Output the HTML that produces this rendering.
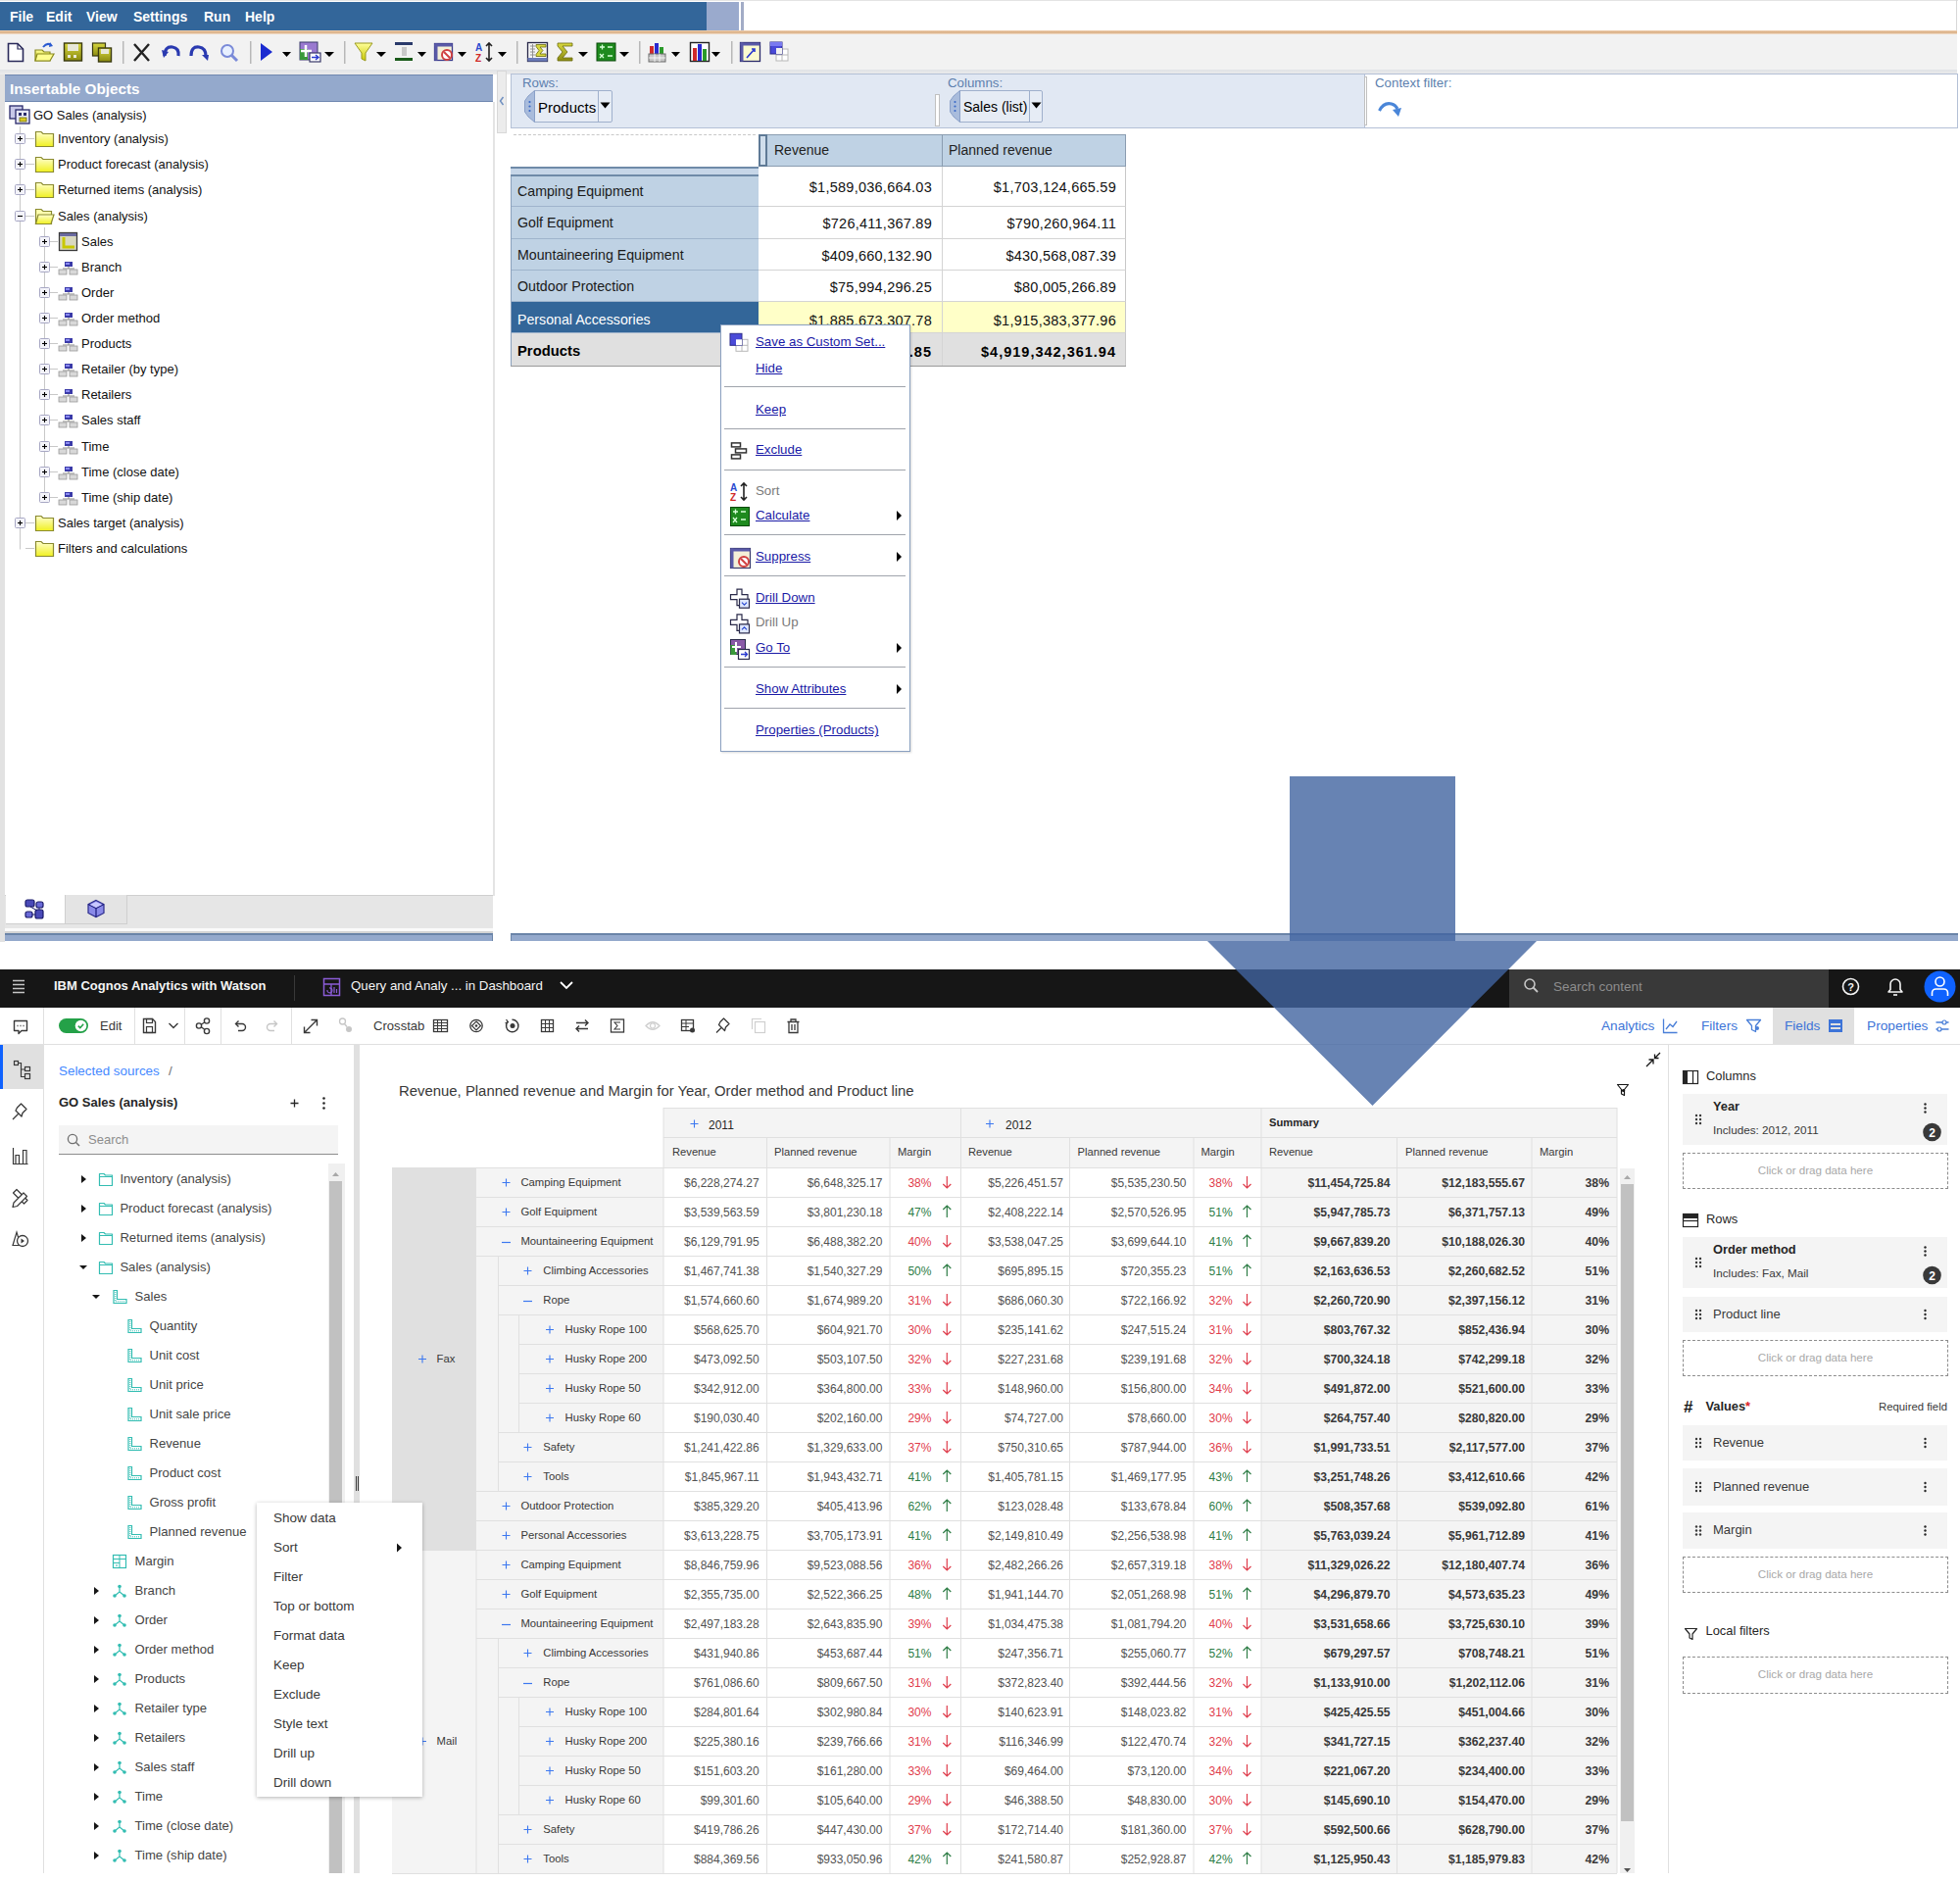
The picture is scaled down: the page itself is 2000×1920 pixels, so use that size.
<!DOCTYPE html>
<html><head><meta charset="utf-8">
<style>
html,body{margin:0;padding:0;width:2000px;height:1920px;overflow:hidden;background:#fff;}
body{position:relative;font-family:"Liberation Sans",sans-serif;}
.a{position:absolute;}
.t{position:absolute;white-space:nowrap;line-height:1;}
svg{overflow:visible}
.menu{color:#fff;font-weight:bold;font-size:14px;top:10px;}
.tree{font-size:13px;color:#111;}
.pm{position:absolute;width:9px;height:9px;border:1px solid #a0a0b8;background:linear-gradient(#fff,#dcdce8);border-radius:1px;box-sizing:content-box}
.pm:before{content:"";position:absolute;left:2px;top:4px;width:5px;height:1px;background:#000;}
.pm.p:after{content:"";position:absolute;left:4px;top:2px;width:1px;height:5px;background:#000;}
.xt{font-size:14.5px;color:#000;}
.cm{font-size:13.5px;color:#1a1aa6;text-decoration:underline;}
.cmg{font-size:13.5px;color:#7a7a7a;}
.cmsep{position:absolute;left:739px;width:185px;height:1px;background:#a0a4ac;}
.b{color:#393939;}
</style></head>
<body>
<!-- ============ TOP SCREENSHOT ============ -->
<div class="a" style="left:0;top:0;width:1998px;height:1px;background:#e4e4e4"></div>
<div class="a" style="left:0;top:2px;width:721px;height:29px;background:#33669a"></div>
<div class="a" style="left:721px;top:2px;width:33px;height:29px;background:#9aaacd"></div>
<div class="a" style="left:756px;top:2px;width:3px;height:29px;background:#a2acc6"></div>
<div class="a" style="left:1996px;top:0;width:1px;height:72px;background:#d8d8d8"></div>
<div class="t menu" style="left:10px">File</div>
<div class="t menu" style="left:47px">Edit</div>
<div class="t menu" style="left:88px">View</div>
<div class="t menu" style="left:136px">Settings</div>
<div class="t menu" style="left:208px">Run</div>
<div class="t menu" style="left:250px">Help</div>
<div class="a" style="left:0;top:31px;width:1997px;height:4px;background:linear-gradient(#f3d8bc,#d6a97c 50%,#f6e6d6)"></div>
<div class="a" style="left:0;top:35px;width:1997px;height:36px;background:#f2f2f2;border-bottom:1px solid #cfd2d6"></div>
<!-- left panel -->
<div class="a" style="left:0;top:72px;width:5px;height:889px;background:#e2e2e2"></div>
<div class="a" style="left:503px;top:104px;width:2px;height:810px;background:#e4e4e4"></div>
<div class="a" style="left:0;top:71px;width:1997px;height:5px;background:linear-gradient(#e0e2e6,#ececec)"></div>
<div class="a" style="left:5px;top:76px;width:498px;height:28px;background:#94a9cc;border-top:1px solid #7088b0;border-bottom:1px solid #7088b0;box-sizing:border-box"></div>
<div class="t" style="left:10px;top:83px;font-size:15.3px;font-weight:bold;color:#fff">Insertable Objects</div>
<div class="a" style="left:5px;top:913px;width:498px;height:34px;background:#e6e6e6;border-top:1px solid #cfcfcf;box-sizing:border-box"></div>
<div class="a" style="left:6px;top:913px;width:60px;height:30px;background:#fff;border-bottom:1px solid #cfcfcf;box-sizing:border-box"></div>
<div class="a" style="left:66px;top:913px;width:64px;height:30px;background:#e4e4e4;border:1px solid #cfcfcf;border-top:none;box-sizing:border-box"></div>
<div class="a" style="left:5px;top:947px;width:498px;height:4px;background:#fafafa"></div>
<div class="a" style="left:5px;top:950px;width:498px;height:2px;background:#d4d4d4"></div>
<div class="a" style="left:5px;top:952px;width:498px;height:8px;background:#94a9cc;border-top:2px solid #6a84a8;border-right:1px solid #6a84a8;box-sizing:border-box"></div>
<div class="a" style="left:521px;top:952px;width:1477px;height:8px;background:#94a9cc;border-top:2px solid #6a84a8;border-left:1px solid #6a84a8;box-sizing:border-box"></div>
<!-- splitter -->
<div class="a" style="left:507px;top:72px;width:10px;height:64px;background:#ececec;border:1px solid #d8d8d8;box-sizing:border-box"></div>
<svg class="a" style="left:509px;top:98px" width="6" height="10"><path d="M4.5 1 L1.5 5 L4.5 9" stroke="#7090c0" stroke-width="1.5" fill="none"/></svg>
<!-- rows/cols drop zone -->
<div class="a" style="left:521px;top:75px;width:873px;height:56px;background:#e1e8f3;border:1px solid #b4c0d6;border-right:none;box-sizing:border-box"></div>
<div class="a" style="left:1392px;top:75px;width:606px;height:56px;background:#fff;border:1px solid #b4c0d6;box-sizing:border-box"></div>
<div class="a" style="left:1392px;top:78px;width:3px;height:50px;background:#fff;border:1px solid #c0c0c0;box-sizing:border-box"></div>
<div class="a" style="left:954px;top:96px;width:5px;height:33px;background:#fff;border:1px solid #c0c0c0;box-sizing:border-box"></div>
<div class="t" style="left:533px;top:77.5px;font-size:13.3px;color:#5d7fae">Rows:</div>
<div class="t" style="left:967px;top:77.5px;font-size:13.3px;color:#5d7fae">Columns:</div>
<div class="t" style="left:1403px;top:77.5px;font-size:13.3px;color:#5d7fae">Context filter:</div>
<!-- Products pill -->
<div class="a" style="left:544px;top:92px;width:81px;height:33px;background:#e6ecf5;border:1px solid #9fb0cc;border-radius:2px;box-sizing:border-box"></div>
<svg class="a" style="left:535px;top:92px" width="12" height="33"><path d="M10.5 0.5 V32.5 L4 27 L0.5 22 V11 L4 6 Z" fill="#a9bcdc" stroke="#8aa0c8"/><circle cx="5.5" cy="12" r="1.1" fill="#3a6ac8"/><circle cx="5.5" cy="16.5" r="1.1" fill="#3a6ac8"/><circle cx="5.5" cy="21" r="1.1" fill="#3a6ac8"/></svg>
<div class="t" style="left:549px;top:102px;font-size:15px;color:#000">Products</div>
<div class="a" style="left:610px;top:93px;width:1px;height:31px;background:#9fb0cc"></div>
<svg class="a" style="left:612px;top:104px" width="12" height="8"><path d="M0.5 0.5 H10.5 L5.5 6.5 Z" fill="#000"/></svg>
<!-- Sales (list) pill -->
<div class="a" style="left:978px;top:92px;width:86px;height:33px;background:#e6ecf5;border:1px solid #9fb0cc;border-radius:2px;box-sizing:border-box"></div>
<svg class="a" style="left:969px;top:92px" width="12" height="33"><path d="M10.5 0.5 V32.5 L4 27 L0.5 22 V11 L4 6 Z" fill="#a9bcdc" stroke="#8aa0c8"/><circle cx="5.5" cy="12" r="1.1" fill="#3a6ac8"/><circle cx="5.5" cy="16.5" r="1.1" fill="#3a6ac8"/><circle cx="5.5" cy="21" r="1.1" fill="#3a6ac8"/></svg>
<div class="t" style="left:983px;top:102px;font-size:14px;color:#000">Sales (list)</div>
<div class="a" style="left:1050px;top:93px;width:1px;height:31px;background:#9fb0cc"></div>
<svg class="a" style="left:1052px;top:104px" width="12" height="8"><path d="M0.5 0.5 H10.5 L5.5 6.5 Z" fill="#000"/></svg>
<!-- redo arrow context filter -->
<svg class="a" style="left:1405px;top:100px" width="28" height="22"><path d="M2.5 13 Q7 4 15 6 Q19 7 21 11" stroke="#4a86d8" stroke-width="3" fill="none"/><path d="M16 12 L25 10 L22 19 Z" fill="#4a86d8"/></svg>
<!-- tabicons -->
<svg class="a" style="left:0;top:913px" width="140" height="40">
<rect x="26" y="5" width="9" height="7" rx="2" fill="#4a4ab8" stroke="#1a1a6a" stroke-width="1.2"/><rect x="37" y="7" width="7" height="6" rx="2" fill="#6a6ad8" stroke="#1a1a6a" stroke-width="1.2"/>
<rect x="26" y="17" width="7" height="6" rx="2" fill="#6a6ad8" stroke="#1a1a6a" stroke-width="1.2"/><rect x="36" y="15" width="8" height="9" rx="2" fill="#4a4ab8" stroke="#1a1a6a" stroke-width="1.2"/>
<path d="M31 12 L38 16 M33 20 H36 M40 13 V15" stroke="#1a1a6a" stroke-width="1"/>
<path d="M98 5.5 L106 9.5 V18.5 L98 22.5 L90 18.5 V9.5 Z" fill="#8a8ae8" stroke="#2a2a8a" stroke-width="1.2"/>
<path d="M90 9.5 L98 13.5 L106 9.5 M98 13.5 V22.5" stroke="#1a1a7a" stroke-width="1.2" fill="none"/>
<path d="M92 10 L98 7 L104 10 L98 13 Z" fill="#c8c8ff"/>
</svg>
<svg class="a" style="left:0;top:35px" width="820" height="36">
<defs>
<linearGradient id="yel" x1="0" y1="0" x2="0" y2="1"><stop offset="0" stop-color="#ffff9a"/><stop offset="1" stop-color="#c8c800"/></linearGradient>
<linearGradient id="olv" x1="0" y1="0" x2="0" y2="1"><stop offset="0" stop-color="#d8d840"/><stop offset="1" stop-color="#8a8a10"/></linearGradient>
</defs>
<!-- new doc -->
<path d="M8.5 9.5 H18 L23.5 15 V27.5 H8.5 Z" fill="#fff" stroke="#2a2a5a" stroke-width="1.6"/>
<path d="M18 9.5 V15 H23.5" fill="none" stroke="#2a2a5a" stroke-width="1.2"/>
<!-- open -->
<path d="M36 16 H43 L45 18 H51 V27 H36 Z" fill="url(#yel)" stroke="#8a8a20" stroke-width="1.2"/>
<path d="M38 20 H55 L51 27 H36 Z" fill="#ffff90" stroke="#8a8a20" stroke-width="1.2"/>
<path d="M44 13 Q48 8 52 11" stroke="#2a5ad0" stroke-width="2" fill="none"/><path d="M51 8 L54 12 L50 13 Z" fill="#2a5ad0"/>
<!-- save -->
<rect x="65.5" y="9" width="18" height="18" fill="url(#olv)" stroke="#3a3a10" stroke-width="1.4"/>
<rect x="69" y="10" width="11" height="7" fill="#e8e8d8"/>
<rect x="69" y="21" width="3" height="3" fill="#e8e8d8"/><rect x="75" y="21" width="3" height="3" fill="#e8e8d8"/>
<!-- save as -->
<rect x="94.5" y="9" width="13" height="13" fill="url(#olv)" stroke="#3a3a10" stroke-width="1.2"/>
<rect x="100.5" y="14" width="13" height="14" fill="url(#olv)" stroke="#3a3a10" stroke-width="1.4"/>
<rect x="103" y="15" width="8" height="5" fill="#e8e8d8"/>
<!-- sep -->
<rect x="125" y="7" width="1.5" height="23" fill="#b8b8b8"/>
<!-- cut -->
<path d="M137 10 L152 27 M152 10 L137 27" stroke="#222" stroke-width="2.4"/>
<!-- undo -->
<path d="M168 22 Q168 12 176 13 Q183 14 182 22" stroke="#2a3ab0" stroke-width="3.2" fill="none"/><path d="M165 16 L172 18 L167 24 Z" fill="#2a3ab0"/>
<!-- redo -->
<path d="M195 22 Q195 12 203 13 Q210 14 210 22" stroke="#2a3ab0" stroke-width="3.2" fill="none"/><path d="M213 21 L206 21 L212 27 Z" fill="#2a3ab0"/>
<!-- find -->
<circle cx="232" cy="17" r="6" fill="#e8f0ff" stroke="#7a8ad8" stroke-width="2"/><path d="M236 21 L242 27" stroke="#7a8ad8" stroke-width="3"/>
<rect x="255" y="7" width="1.5" height="23" fill="#b8b8b8"/>
<!-- run -->
<path d="M266 9 L278 18 L266 27 Z" fill="#1a2ad0"/>
<path d="M288 18 H297 L292.5 23 Z" fill="#000"/>
<!-- report -->
<rect x="306" y="8" width="18" height="18" fill="#9a7ad0" stroke="#3a3a6a" stroke-width="1"/>
<rect x="306" y="15" width="8" height="11" fill="#3a9a3a"/>
<path d="M312 11 V23 M307 17 H318" stroke="#fff" stroke-width="2.5"/>
<rect x="316" y="19" width="11" height="9" fill="#fff" stroke="#3a3a6a" stroke-width="1.2"/><path d="M318 23.5 H324 M322 21 L325 23.5 L322 26" stroke="#2a3ad0" stroke-width="1.4" fill="none"/>
<path d="M331 18 H341 L336 23 Z" fill="#000"/>
<rect x="351" y="7" width="1.5" height="23" fill="#b8b8b8"/>
<!-- filter -->
<path d="M362 9 H380 L373 19 V27 L369 25 V19 Z" fill="url(#yel)" stroke="#9a9a20" stroke-width="1"/>
<path d="M384 18 H394 L389 23 Z" fill="#000"/>
<!-- summarize -->
<rect x="403" y="8" width="18" height="3" fill="#2a3a6a"/><rect x="403" y="24" width="18" height="3" fill="#1a5a1a"/>
<path d="M410 13 H415 V22 H410 Z" fill="#c8c8c8"/>
<path d="M426 18 H435 L430.5 23 Z" fill="#000"/>
<!-- suppress -->
<rect x="443.5" y="9.5" width="18" height="17" fill="#f4f0d8" stroke="#3a3a8a" stroke-width="1.3"/>
<rect x="443.5" y="9.5" width="18" height="3" fill="#5a5aa8"/><rect x="443.5" y="9.5" width="3" height="17" fill="#5a5aa8"/>
<circle cx="456" cy="21" r="5" fill="#fff" stroke="#d04040" stroke-width="2"/><path d="M453 18 L459 24" stroke="#d04040" stroke-width="2"/>
<path d="M467 18 H476 L471.5 23 Z" fill="#000"/>
<!-- sort -->
<text x="485" y="17" font-family="Liberation Sans" font-weight="bold" font-size="10" fill="#2a4ad0">A</text>
<text x="485" y="28" font-family="Liberation Sans" font-weight="bold" font-size="10" fill="#d02a2a">Z</text>
<path d="M499 9 V27 M496 12 L499 9 L502 12 M496 24 L499 27 L502 24" stroke="#222" stroke-width="1.6" fill="none"/>
<path d="M508 18 H517 L512.5 23 Z" fill="#000"/>
<rect x="527" y="7" width="1.5" height="23" fill="#b8b8b8"/>
<!-- summary table -->
<rect x="538.5" y="8.5" width="20" height="19" fill="#f4f4f4" stroke="#2a2a4a" stroke-width="1.3"/>
<path d="M541 12 H546 M541 15 H546 M541 18 H546 M541 21 H546 M543.5 10 V24" stroke="#8a8a8a" stroke-width="0.9"/>
<path d="M547 10.5 H557 V13 H551 L554 16.5 L551 20 H557 V22.5 H547 V20.5 L550 16.5 L547 12.5 Z" fill="#d8d840" stroke="#6a6a10" stroke-width="0.8"/>
<rect x="538.5" y="24" width="20" height="3.5" fill="#6a7ab8"/>
<!-- sigma -->
<path d="M569 9 H584 V12 H574 L579 18 L574 24 H584 V27 H569 V24 L574 18 L569 12 Z" fill="url(#olv)" stroke="#6a6a10" stroke-width="0.8"/>
<path d="M590 18 H600 L595 23 Z" fill="#000"/>
<!-- calc -->
<rect x="609" y="9" width="19" height="18" fill="#1e8a1e" stroke="#0a4a0a" stroke-width="1"/>
<path d="M612 13 H617 M614.5 10.5 V15.5 M620 13 H625 M612 20 L616 24 M616 20 L612 24 M620 22 H625" stroke="#d8ffd8" stroke-width="1.3"/>
<path d="M632 18 H642 L637 23 Z" fill="#000"/>
<rect x="652" y="7" width="1.5" height="23" fill="#b8b8b8"/>
<!-- chart table -->
<rect x="663" y="12" width="4" height="8" fill="#d02a2a"/><rect x="668" y="9" width="4" height="11" fill="#2a2ad0"/><rect x="673" y="13" width="4" height="7" fill="#2a9a2a"/>
<rect x="662" y="20" width="17" height="8" fill="#c8c8c8" stroke="#6a6a6a" stroke-width="1"/>
<path d="M662 24 H679 M668 20 V28 M673 20 V28" stroke="#fff" stroke-width="0.8"/>
<path d="M685 18 H694 L689.5 23 Z" fill="#000"/>
<!-- chart -->
<rect x="704.5" y="8.5" width="19" height="19" fill="#fff" stroke="#222" stroke-width="1.4"/>
<rect x="707" y="14" width="4" height="13" fill="#d02a2a"/><rect x="712" y="10" width="4" height="17" fill="#2a2ad0"/><rect x="717" y="15" width="4" height="12" fill="#2a9a2a"/>
<path d="M726 18 H735 L730.5 23 Z" fill="#000"/>
<rect x="746" y="7" width="1.5" height="23" fill="#b8b8b8"/>
<!-- swap -->
<rect x="755.5" y="8.5" width="20" height="19" fill="#fafad0" stroke="#2a2a6a" stroke-width="1.3"/>
<rect x="755.5" y="8.5" width="20" height="3" fill="#5a5aa8"/><rect x="755.5" y="8.5" width="3" height="19" fill="#5a5aa8"/>
<path d="M762 24 L770 15 M767 15 H770 V18" stroke="#2a3ad0" stroke-width="1.6" fill="none"/>
<!-- custom set -->
<rect x="792" y="15" width="12" height="12" fill="#fff" stroke="#b8b8b8" stroke-width="1"/><path d="M798 15 V27 M792 21 H804" stroke="#b8b8b8"/>
<rect x="786" y="8" width="12" height="12" fill="#4a4ad8" stroke="#2a2a8a" stroke-width="1"/><rect x="786" y="8" width="12" height="4" fill="#7a7af0"/><rect x="792" y="14" width="6" height="6" fill="#f2f2f2"/>
</svg>
<svg class="a" style="left:0;top:0" width="500" height="600">
<defs><linearGradient id="fy" x1="0" y1="0" x2="0" y2="1"><stop offset="0" stop-color="#ffffd0"/><stop offset="1" stop-color="#f0f020"/></linearGradient></defs>
<path d="M20.5 129 V560.5" stroke="#c8c8c8"/>
<path d="M45.5 232 V508.5" stroke="#c8c8c8"/>
<rect x="10" y="108" width="13" height="13" fill="#c8c8e8" stroke="#2a2a6a" stroke-width="1.3"/>
<rect x="16" y="112" width="14" height="14" fill="#e8e8f8" stroke="#2a2a6a" stroke-width="1.3"/>
<rect x="19" y="115" width="3" height="3" fill="#2a2a6a"/><rect x="24" y="115" width="3" height="3" fill="#2a2a6a"/><rect x="20" y="120" width="7" height="4" fill="#d8c820" stroke="#6a6a10" stroke-width="0.8"/>
<path d="M26 141.5 H35" stroke="#c8c8c8"/>
<rect x="15.5" y="136.5" width="10" height="10" rx="1" fill="#f4f4fa" stroke="#a8a8c4"/>
<path d="M18 141.5 H23" stroke="#000" stroke-width="1.1"/>
<path d="M20.5 139 V144" stroke="#000" stroke-width="1.1"/>
<path d="M36.5 134.5 H42 L44 136.5 H54.5 V149.5 H36.5 Z" fill="url(#fy)" stroke="#8a8a30" stroke-width="1.2"/>
<path d="M26 167.5 H35" stroke="#c8c8c8"/>
<rect x="15.5" y="162.5" width="10" height="10" rx="1" fill="#f4f4fa" stroke="#a8a8c4"/>
<path d="M18 167.5 H23" stroke="#000" stroke-width="1.1"/>
<path d="M20.5 165 V170" stroke="#000" stroke-width="1.1"/>
<path d="M36.5 160.5 H42 L44 162.5 H54.5 V175.5 H36.5 Z" fill="url(#fy)" stroke="#8a8a30" stroke-width="1.2"/>
<path d="M26 193.5 H35" stroke="#c8c8c8"/>
<rect x="15.5" y="188.5" width="10" height="10" rx="1" fill="#f4f4fa" stroke="#a8a8c4"/>
<path d="M18 193.5 H23" stroke="#000" stroke-width="1.1"/>
<path d="M20.5 191 V196" stroke="#000" stroke-width="1.1"/>
<path d="M36.5 186.5 H42 L44 188.5 H54.5 V201.5 H36.5 Z" fill="url(#fy)" stroke="#8a8a30" stroke-width="1.2"/>
<path d="M26 220.5 H35" stroke="#c8c8c8"/>
<rect x="15.5" y="215.5" width="10" height="10" rx="1" fill="#f4f4fa" stroke="#a8a8c4"/>
<path d="M18 220.5 H23" stroke="#000" stroke-width="1.1"/>
<path d="M36.5 213.5 H42 L44 215.5 H52.5 V228.5 H36.5 Z" fill="#ffffb0" stroke="#8a8a30" stroke-width="1.2"/>
<path d="M39 219 H55 L52 228.5 H36.5 Z" fill="url(#fy)" stroke="#8a8a30" stroke-width="1.2"/>
<path d="M51 246.5 H59" stroke="#c8c8c8"/>
<rect x="40.5" y="241.5" width="10" height="10" rx="1" fill="#f4f4fa" stroke="#a8a8c4"/>
<path d="M43 246.5 H48" stroke="#000" stroke-width="1.1"/>
<path d="M45.5 244 V249" stroke="#000" stroke-width="1.1"/>
<rect x="60.5" y="237.5" width="18" height="18" fill="#d8d8c0" stroke="#3a3a3a" stroke-width="1.3"/>
<rect x="61" y="238" width="17" height="3" fill="#6a6aa0"/>
<path d="M65 242 V252 H76" stroke="#c8c800" stroke-width="3" fill="none"/>
<path d="M51 272.5 H59" stroke="#c8c8c8"/>
<rect x="40.5" y="267.5" width="10" height="10" rx="1" fill="#f4f4fa" stroke="#a8a8c4"/>
<path d="M43 272.5 H48" stroke="#000" stroke-width="1.1"/>
<path d="M45.5 270 V275" stroke="#000" stroke-width="1.1"/>
<rect x="66" y="267" width="8" height="5" fill="#3a3aa8"/><rect x="67" y="268" width="4" height="2" fill="#8a8af0"/>
<path d="M70 272 V274 M64 274 H76" stroke="#8a8a8a" stroke-width="1"/>
<rect x="60" y="275" width="8" height="5" fill="#d8d8d8" stroke="#9a9a9a" stroke-width="0.8"/><rect x="71" y="275" width="8" height="5" fill="#d8d8d8" stroke="#9a9a9a" stroke-width="0.8"/>
<path d="M51 298.5 H59" stroke="#c8c8c8"/>
<rect x="40.5" y="293.5" width="10" height="10" rx="1" fill="#f4f4fa" stroke="#a8a8c4"/>
<path d="M43 298.5 H48" stroke="#000" stroke-width="1.1"/>
<path d="M45.5 296 V301" stroke="#000" stroke-width="1.1"/>
<rect x="66" y="293" width="8" height="5" fill="#3a3aa8"/><rect x="67" y="294" width="4" height="2" fill="#8a8af0"/>
<path d="M70 298 V300 M64 300 H76" stroke="#8a8a8a" stroke-width="1"/>
<rect x="60" y="301" width="8" height="5" fill="#d8d8d8" stroke="#9a9a9a" stroke-width="0.8"/><rect x="71" y="301" width="8" height="5" fill="#d8d8d8" stroke="#9a9a9a" stroke-width="0.8"/>
<path d="M51 324.5 H59" stroke="#c8c8c8"/>
<rect x="40.5" y="319.5" width="10" height="10" rx="1" fill="#f4f4fa" stroke="#a8a8c4"/>
<path d="M43 324.5 H48" stroke="#000" stroke-width="1.1"/>
<path d="M45.5 322 V327" stroke="#000" stroke-width="1.1"/>
<rect x="66" y="319" width="8" height="5" fill="#3a3aa8"/><rect x="67" y="320" width="4" height="2" fill="#8a8af0"/>
<path d="M70 324 V326 M64 326 H76" stroke="#8a8a8a" stroke-width="1"/>
<rect x="60" y="327" width="8" height="5" fill="#d8d8d8" stroke="#9a9a9a" stroke-width="0.8"/><rect x="71" y="327" width="8" height="5" fill="#d8d8d8" stroke="#9a9a9a" stroke-width="0.8"/>
<path d="M51 350.5 H59" stroke="#c8c8c8"/>
<rect x="40.5" y="345.5" width="10" height="10" rx="1" fill="#f4f4fa" stroke="#a8a8c4"/>
<path d="M43 350.5 H48" stroke="#000" stroke-width="1.1"/>
<path d="M45.5 348 V353" stroke="#000" stroke-width="1.1"/>
<rect x="66" y="345" width="8" height="5" fill="#3a3aa8"/><rect x="67" y="346" width="4" height="2" fill="#8a8af0"/>
<path d="M70 350 V352 M64 352 H76" stroke="#8a8a8a" stroke-width="1"/>
<rect x="60" y="353" width="8" height="5" fill="#d8d8d8" stroke="#9a9a9a" stroke-width="0.8"/><rect x="71" y="353" width="8" height="5" fill="#d8d8d8" stroke="#9a9a9a" stroke-width="0.8"/>
<path d="M51 376.5 H59" stroke="#c8c8c8"/>
<rect x="40.5" y="371.5" width="10" height="10" rx="1" fill="#f4f4fa" stroke="#a8a8c4"/>
<path d="M43 376.5 H48" stroke="#000" stroke-width="1.1"/>
<path d="M45.5 374 V379" stroke="#000" stroke-width="1.1"/>
<rect x="66" y="371" width="8" height="5" fill="#3a3aa8"/><rect x="67" y="372" width="4" height="2" fill="#8a8af0"/>
<path d="M70 376 V378 M64 378 H76" stroke="#8a8a8a" stroke-width="1"/>
<rect x="60" y="379" width="8" height="5" fill="#d8d8d8" stroke="#9a9a9a" stroke-width="0.8"/><rect x="71" y="379" width="8" height="5" fill="#d8d8d8" stroke="#9a9a9a" stroke-width="0.8"/>
<path d="M51 402.5 H59" stroke="#c8c8c8"/>
<rect x="40.5" y="397.5" width="10" height="10" rx="1" fill="#f4f4fa" stroke="#a8a8c4"/>
<path d="M43 402.5 H48" stroke="#000" stroke-width="1.1"/>
<path d="M45.5 400 V405" stroke="#000" stroke-width="1.1"/>
<rect x="66" y="397" width="8" height="5" fill="#3a3aa8"/><rect x="67" y="398" width="4" height="2" fill="#8a8af0"/>
<path d="M70 402 V404 M64 404 H76" stroke="#8a8a8a" stroke-width="1"/>
<rect x="60" y="405" width="8" height="5" fill="#d8d8d8" stroke="#9a9a9a" stroke-width="0.8"/><rect x="71" y="405" width="8" height="5" fill="#d8d8d8" stroke="#9a9a9a" stroke-width="0.8"/>
<path d="M51 428.5 H59" stroke="#c8c8c8"/>
<rect x="40.5" y="423.5" width="10" height="10" rx="1" fill="#f4f4fa" stroke="#a8a8c4"/>
<path d="M43 428.5 H48" stroke="#000" stroke-width="1.1"/>
<path d="M45.5 426 V431" stroke="#000" stroke-width="1.1"/>
<rect x="66" y="423" width="8" height="5" fill="#3a3aa8"/><rect x="67" y="424" width="4" height="2" fill="#8a8af0"/>
<path d="M70 428 V430 M64 430 H76" stroke="#8a8a8a" stroke-width="1"/>
<rect x="60" y="431" width="8" height="5" fill="#d8d8d8" stroke="#9a9a9a" stroke-width="0.8"/><rect x="71" y="431" width="8" height="5" fill="#d8d8d8" stroke="#9a9a9a" stroke-width="0.8"/>
<path d="M51 455.5 H59" stroke="#c8c8c8"/>
<rect x="40.5" y="450.5" width="10" height="10" rx="1" fill="#f4f4fa" stroke="#a8a8c4"/>
<path d="M43 455.5 H48" stroke="#000" stroke-width="1.1"/>
<path d="M45.5 453 V458" stroke="#000" stroke-width="1.1"/>
<rect x="66" y="450" width="8" height="5" fill="#3a3aa8"/><rect x="67" y="451" width="4" height="2" fill="#8a8af0"/>
<path d="M70 455 V457 M64 457 H76" stroke="#8a8a8a" stroke-width="1"/>
<rect x="60" y="458" width="8" height="5" fill="#d8d8d8" stroke="#9a9a9a" stroke-width="0.8"/><rect x="71" y="458" width="8" height="5" fill="#d8d8d8" stroke="#9a9a9a" stroke-width="0.8"/>
<path d="M51 481.5 H59" stroke="#c8c8c8"/>
<rect x="40.5" y="476.5" width="10" height="10" rx="1" fill="#f4f4fa" stroke="#a8a8c4"/>
<path d="M43 481.5 H48" stroke="#000" stroke-width="1.1"/>
<path d="M45.5 479 V484" stroke="#000" stroke-width="1.1"/>
<rect x="66" y="476" width="8" height="5" fill="#3a3aa8"/><rect x="67" y="477" width="4" height="2" fill="#8a8af0"/>
<path d="M70 481 V483 M64 483 H76" stroke="#8a8a8a" stroke-width="1"/>
<rect x="60" y="484" width="8" height="5" fill="#d8d8d8" stroke="#9a9a9a" stroke-width="0.8"/><rect x="71" y="484" width="8" height="5" fill="#d8d8d8" stroke="#9a9a9a" stroke-width="0.8"/>
<path d="M51 507.5 H59" stroke="#c8c8c8"/>
<rect x="40.5" y="502.5" width="10" height="10" rx="1" fill="#f4f4fa" stroke="#a8a8c4"/>
<path d="M43 507.5 H48" stroke="#000" stroke-width="1.1"/>
<path d="M45.5 505 V510" stroke="#000" stroke-width="1.1"/>
<rect x="66" y="502" width="8" height="5" fill="#3a3aa8"/><rect x="67" y="503" width="4" height="2" fill="#8a8af0"/>
<path d="M70 507 V509 M64 509 H76" stroke="#8a8a8a" stroke-width="1"/>
<rect x="60" y="510" width="8" height="5" fill="#d8d8d8" stroke="#9a9a9a" stroke-width="0.8"/><rect x="71" y="510" width="8" height="5" fill="#d8d8d8" stroke="#9a9a9a" stroke-width="0.8"/>
<path d="M26 533.5 H35" stroke="#c8c8c8"/>
<rect x="15.5" y="528.5" width="10" height="10" rx="1" fill="#f4f4fa" stroke="#a8a8c4"/>
<path d="M18 533.5 H23" stroke="#000" stroke-width="1.1"/>
<path d="M20.5 531 V536" stroke="#000" stroke-width="1.1"/>
<path d="M36.5 526.5 H42 L44 528.5 H54.5 V541.5 H36.5 Z" fill="url(#fy)" stroke="#8a8a30" stroke-width="1.2"/>
<path d="M26 559.5 H35" stroke="#c8c8c8"/>
<path d="M36.5 552.5 H42 L44 554.5 H54.5 V567.5 H36.5 Z" fill="url(#fy)" stroke="#8a8a30" stroke-width="1.2"/>
</svg>
<div class="t tree" style="left:34px;top:111px">GO Sales (analysis)</div>
<div class="t tree" style="left:59px;top:135px">Inventory (analysis)</div>
<div class="t tree" style="left:59px;top:161px">Product forecast (analysis)</div>
<div class="t tree" style="left:59px;top:187px">Returned items (analysis)</div>
<div class="t tree" style="left:59px;top:214px">Sales (analysis)</div>
<div class="t tree" style="left:83px;top:240px">Sales</div>
<div class="t tree" style="left:83px;top:266px">Branch</div>
<div class="t tree" style="left:83px;top:292px">Order</div>
<div class="t tree" style="left:83px;top:318px">Order method</div>
<div class="t tree" style="left:83px;top:344px">Products</div>
<div class="t tree" style="left:83px;top:370px">Retailer (by type)</div>
<div class="t tree" style="left:83px;top:396px">Retailers</div>
<div class="t tree" style="left:83px;top:422px">Sales staff</div>
<div class="t tree" style="left:83px;top:449px">Time</div>
<div class="t tree" style="left:83px;top:475px">Time (close date)</div>
<div class="t tree" style="left:83px;top:501px">Time (ship date)</div>
<div class="t tree" style="left:59px;top:527px">Sales target (analysis)</div>
<div class="t tree" style="left:59px;top:553px">Filters and calculations</div>
<div class="a" style="left:524px;top:137px;width:247px;height:0;border-top:1px dashed #c8c8c8"></div>
<div class="a" style="left:774px;top:137px;width:375px;height:33px;background:#bfd2e4;border:1px solid #8a9cb0;box-sizing:border-box"></div>
<div class="a" style="left:774px;top:137px;width:9px;height:33px;background:#d0deec;border:2px solid #5f7a96;box-sizing:border-box"></div>
<div class="a" style="left:961px;top:137px;width:1px;height:33px;background:#8a9cb0"></div>
<div class="t xt" style="left:790px;top:146px;font-size:14px;color:#222">Revenue</div>
<div class="t xt" style="left:968px;top:146px;font-size:14px;color:#222">Planned revenue</div>
<div class="a" style="left:521px;top:170px;width:253px;height:10px;background:#c6d6e8;border-top:2px solid #6f8aa8;border-bottom:2px solid #6f8aa8;box-sizing:border-box"></div>
<div class="a" style="left:521px;top:180px;width:253px;height:31px;background:#bfd2e4;border-bottom:1px solid #9fb4cc;box-sizing:border-box"></div>
<div class="a" style="left:774px;top:180px;width:188px;height:31px;background:#fff;border-bottom:1px solid #d4d4d4;border-right:1px solid #d4d4d4;box-sizing:border-box"></div>
<div class="a" style="left:962px;top:180px;width:187px;height:31px;background:#fff;border-bottom:1px solid #d4d4d4;border-right:1px solid #c8c8c8;box-sizing:border-box"></div>
<div class="t" style="left:528px;top:188.1px;font-size:14.2px;color:#1a1a1a">Camping Equipment</div>
<div class="t" style="right:1049px;top:184.1px;font-size:14.5px;letter-spacing:0.25px;color:#111">$1,589,036,664.03</div>
<div class="t" style="right:861px;top:184.1px;font-size:14.5px;letter-spacing:0.25px;color:#111">$1,703,124,665.59</div>
<div class="a" style="left:521px;top:211px;width:253px;height:33px;background:#bfd2e4;border-bottom:1px solid #9fb4cc;box-sizing:border-box"></div>
<div class="a" style="left:774px;top:211px;width:188px;height:33px;background:#fff;border-bottom:1px solid #d4d4d4;border-right:1px solid #d4d4d4;box-sizing:border-box"></div>
<div class="a" style="left:962px;top:211px;width:187px;height:33px;background:#fff;border-bottom:1px solid #d4d4d4;border-right:1px solid #c8c8c8;box-sizing:border-box"></div>
<div class="t" style="left:528px;top:220.1px;font-size:14.2px;color:#1a1a1a">Golf Equipment</div>
<div class="t" style="right:1049px;top:221.1px;font-size:14.5px;letter-spacing:0.25px;color:#111">$726,411,367.89</div>
<div class="t" style="right:861px;top:221.1px;font-size:14.5px;letter-spacing:0.25px;color:#111">$790,260,964.11</div>
<div class="a" style="left:521px;top:244px;width:253px;height:32px;background:#bfd2e4;border-bottom:1px solid #9fb4cc;box-sizing:border-box"></div>
<div class="a" style="left:774px;top:244px;width:188px;height:32px;background:#fff;border-bottom:1px solid #d4d4d4;border-right:1px solid #d4d4d4;box-sizing:border-box"></div>
<div class="a" style="left:962px;top:244px;width:187px;height:32px;background:#fff;border-bottom:1px solid #d4d4d4;border-right:1px solid #c8c8c8;box-sizing:border-box"></div>
<div class="t" style="left:528px;top:252.8px;font-size:14.2px;color:#1a1a1a">Mountaineering Equipment</div>
<div class="t" style="right:1049px;top:253.5px;font-size:14.5px;letter-spacing:0.25px;color:#111">$409,660,132.90</div>
<div class="t" style="right:861px;top:253.5px;font-size:14.5px;letter-spacing:0.25px;color:#111">$430,568,087.39</div>
<div class="a" style="left:521px;top:276px;width:253px;height:32px;background:#bfd2e4;border-bottom:1px solid #9fb4cc;box-sizing:border-box"></div>
<div class="a" style="left:774px;top:276px;width:188px;height:32px;background:#fff;border-bottom:1px solid #d4d4d4;border-right:1px solid #d4d4d4;box-sizing:border-box"></div>
<div class="a" style="left:962px;top:276px;width:187px;height:32px;background:#fff;border-bottom:1px solid #d4d4d4;border-right:1px solid #c8c8c8;box-sizing:border-box"></div>
<div class="t" style="left:528px;top:285.1px;font-size:14.2px;color:#1a1a1a">Outdoor Protection</div>
<div class="t" style="right:1049px;top:286.1px;font-size:14.5px;letter-spacing:0.25px;color:#111">$75,994,296.25</div>
<div class="t" style="right:861px;top:286.1px;font-size:14.5px;letter-spacing:0.25px;color:#111">$80,005,266.89</div>
<div class="a" style="left:521px;top:308px;width:253px;height:32px;background:#336699;border-bottom:1px solid #9fb4cc;box-sizing:border-box"></div>
<div class="a" style="left:774px;top:308px;width:188px;height:32px;background:#ffffc8;border-bottom:1px solid #d4d4d4;border-right:1px solid #d4d4d4;box-sizing:border-box"></div>
<div class="a" style="left:962px;top:308px;width:187px;height:32px;background:#ffffc8;border-bottom:1px solid #d4d4d4;border-right:1px solid #c8c8c8;box-sizing:border-box"></div>
<div class="t" style="left:528px;top:318.5px;font-size:14.2px;color:#fff">Personal Accessories</div>
<div class="t" style="right:1049px;top:319.5px;font-size:14.5px;letter-spacing:0.25px;color:#111">$1,885,673,307.78</div>
<div class="t" style="right:861px;top:319.5px;font-size:14.5px;letter-spacing:0.25px;color:#111">$1,915,383,377.96</div>
<div class="a" style="left:521px;top:340px;width:253px;height:34px;background:#e0e0e0;border-bottom:1px solid #a8a8a8;box-sizing:border-box"></div>
<div class="a" style="left:774px;top:340px;width:188px;height:34px;background:#e0e0e0;border-bottom:1px solid #d4d4d4;border-right:1px solid #d4d4d4;box-sizing:border-box"></div>
<div class="a" style="left:962px;top:340px;width:187px;height:34px;background:#e0e0e0;border-bottom:1px solid #d4d4d4;border-right:1px solid #c8c8c8;box-sizing:border-box"></div>
<div class="t" style="left:528px;top:350.5px;font-size:14.8px;font-weight:bold;color:#000">Products</div>
<div class="t" style="right:1049px;top:351.5px;font-size:14.5px;font-weight:bold;letter-spacing:1px;color:#000">$4,686,775,768.85</div>
<div class="t" style="right:861px;top:351.5px;font-size:14.5px;font-weight:bold;letter-spacing:1px;color:#000">$4,919,342,361.94</div>
<div class="a" style="left:521px;top:180px;width:1px;height:194px;background:#8aa0bc"></div>
<div class="a" style="left:521px;top:373px;width:628px;height:1px;background:#9a9a9a"></div>
<div class="a" style="left:961px;top:170px;width:1px;height:10px;background:#d4d4d4"></div>
<div class="a" style="left:1148px;top:170px;width:1px;height:10px;background:#c8c8c8"></div>
<div class="a" style="left:735px;top:331px;width:194px;height:436px;background:#fff;border:1px solid #8aa0c0;box-sizing:border-box;box-shadow:1px 1px 2px rgba(0,0,0,0.15)"></div>
<div class="cmsep" style="top:394px"></div>
<div class="cmsep" style="top:437px"></div>
<div class="cmsep" style="top:479px"></div>
<div class="cmsep" style="top:545px"></div>
<div class="cmsep" style="top:587px"></div>
<div class="cmsep" style="top:680px"></div>
<div class="cmsep" style="top:722px"></div>
<div class="t cm" style="left:771px;top:342.3px;font-size:13.3px">Save as Custom Set...</div>
<div class="t cm" style="left:771px;top:368.7px;font-size:13.3px">Hide</div>
<div class="t cm" style="left:771px;top:410.8px;font-size:13.3px">Keep</div>
<div class="t cm" style="left:771px;top:452.4px;font-size:13.3px">Exclude</div>
<div class="t cmg" style="left:771px;top:494px;font-size:13.3px">Sort</div>
<div class="t cm" style="left:771px;top:519px;font-size:13.3px">Calculate</div>
<div class="t cm" style="left:771px;top:561px;font-size:13.3px">Suppress</div>
<div class="t cm" style="left:771px;top:602.7px;font-size:13.3px">Drill Down</div>
<div class="t cmg" style="left:771px;top:628.4px;font-size:13.3px">Drill Up</div>
<div class="t cm" style="left:771px;top:654px;font-size:13.3px">Go To</div>
<div class="t cm" style="left:771px;top:696px;font-size:13.3px">Show Attributes</div>
<div class="t cm" style="left:771px;top:738.4px;font-size:13.3px">Properties (Products)</div>
<svg class="a" style="left:0;top:0" width="940" height="780">
<rect x="751" y="346.3" width="12" height="12" fill="#fff" stroke="#b8b8b8"/><path d="M757 346.3 V358.3 M751 352.3 H763" stroke="#b8b8b8"/>
<rect x="745" y="340.3" width="12" height="12" fill="#4a4ad8" stroke="#2a2a8a"/><rect x="751" y="346.3" width="6" height="6" fill="#fff"/>
<rect x="746.5" y="451.9" width="9" height="4" fill="#fff" stroke="#333" stroke-width="1.5"/><rect x="750.5" y="457.9" width="11" height="4" fill="#fff" stroke="#333" stroke-width="1.5"/><rect x="746.5" y="463.9" width="9" height="4" fill="#fff" stroke="#333" stroke-width="1.5"/>
<text x="745" y="501" font-family="Liberation Sans" font-weight="bold" font-size="10" fill="#2a4ad0">A</text><text x="745" y="511" font-family="Liberation Sans" font-weight="bold" font-size="10" fill="#d02a2a">Z</text>
<path d="M759 493 V510 M756 496 L759 493 L762 496 M756 507 L759 510 L762 507" stroke="#222" stroke-width="1.6" fill="none"/>
<path d="M915 521 L920 526 L915 531 Z" fill="#000"/>
<rect x="745.5" y="517.5" width="19" height="19" fill="#1e8a1e" stroke="#0a4a0a"/><path d="M748 522 H753 M750.5 519.5 V524.5 M756 522 H761 M748 528 L752 533 M752 528 L748 533 M756 530 H761" stroke="#d8ffd8" stroke-width="1.3"/>
<path d="M915 563 L920 568 L915 573 Z" fill="#000"/>
<rect x="745.5" y="559.5" width="20" height="20" fill="#f4f0d8" stroke="#3a3a6a" stroke-width="1.2"/><rect x="745.5" y="559.5" width="20" height="3" fill="#5a5aa8"/><rect x="745.5" y="559.5" width="3" height="20" fill="#5a5aa8"/><circle cx="759" cy="573" r="5" fill="#fff" stroke="#d04040" stroke-width="2"/><path d="M756 570 L762 576" stroke="#d04040" stroke-width="2"/>
<path d="M752 601.2 H757 V606.7 H763 V611.7 H757 V617.7 H752 V611.7 H745.5 V606.7 H752 Z" fill="#fff" stroke="#2a2a4a" stroke-width="1.2"/>
<rect x="754.5" y="611.2" width="10" height="9" fill="#dfe8ff" stroke="#2a2a4a" stroke-width="1.2"/>
<path d="M757 614.7 L759.5 617.2 L762 614.7" stroke="#2a4ad0" stroke-width="1.2" fill="none"/>
<path d="M752 626.9 H757 V632.4 H763 V637.4 H757 V643.4 H752 V637.4 H745.5 V632.4 H752 Z" fill="#fff" stroke="#2a2a4a" stroke-width="1.2"/>
<rect x="754.5" y="636.9" width="10" height="9" fill="#dfe8ff" stroke="#2a2a4a" stroke-width="1.2"/>
<path d="M757 642.4 L759.5 639.9 L762 642.4" stroke="#2a4ad0" stroke-width="1.2" fill="none"/>
<path d="M915 656 L920 661 L915 666 Z" fill="#000"/>
<rect x="745.5" y="652.5" width="15" height="15" fill="#8a5aa8" stroke="#2a2a4a"/><rect x="745.5" y="658" width="6" height="10" fill="#3a9a3a"/><path d="M751 655 V665 M747 660 H756" stroke="#fff" stroke-width="2"/><rect x="753.5" y="662.5" width="11" height="10" fill="#fff" stroke="#2a2a4a" stroke-width="1.2"/><path d="M756 667.5 H762 M760 665 L762.5 667.5 L760 670" stroke="#2a3ad0" stroke-width="1.3" fill="none"/>
<path d="M915 698 L920 703 L915 708 Z" fill="#000"/>
</svg>
<!-- ============ BOTTOM SCREENSHOT ============ -->
<div class="a" style="left:0;top:989px;width:2000px;height:39px;background:#161616"></div>
<svg class="a" style="left:0;top:989px" width="2000" height="39">
<path d="M13 11.5 H25 M13 15.5 H25 M13 19.5 H25 M13 23.5 H25" stroke="#c6c6c6" stroke-width="1.6"/>
<rect x="300" y="6" width="1" height="26" fill="#393939"/>
<rect x="330.5" y="9.5" width="16" height="17" fill="none" stroke="#8a5cd6" stroke-width="1.5"/>
<path d="M330.5 15 H346.5 M338 15 V26.5" stroke="#8a5cd6" stroke-width="1.3"/>
<path d="M334 21 A2.5 2.5 0 1 0 336 19" stroke="#8a5cd6" stroke-width="1.2" fill="none"/>
<path d="M341 18 V24 M343.5 20 V24" stroke="#8a5cd6" stroke-width="1.2"/>
<path d="M572 13 L578 19 L584 13" stroke="#fff" stroke-width="1.8" fill="none"/>
<rect x="1540" y="0" width="326" height="39" fill="#393939"/>
<circle cx="1561" cy="15" r="5" fill="none" stroke="#c6c6c6" stroke-width="1.6"/><path d="M1564.5 18.5 L1569 23" stroke="#c6c6c6" stroke-width="1.8"/>
<circle cx="1888.5" cy="17.5" r="8" fill="none" stroke="#f4f4f4" stroke-width="1.6"/>
<text x="1888.5" y="22" text-anchor="middle" font-family="Liberation Sans" font-size="11" font-weight="bold" fill="#f4f4f4">?</text>
<path d="M1927 23 H1941 L1939 20.5 V15 A5 5 0 0 0 1929 15 V20.5 Z" fill="none" stroke="#f4f4f4" stroke-width="1.6" stroke-linejoin="round"/>
<path d="M1932 26 H1936" stroke="#f4f4f4" stroke-width="1.6"/>
<circle cx="1979.5" cy="17.5" r="16" fill="#0f62fe"/>
<circle cx="1979.5" cy="12.5" r="4.5" fill="none" stroke="#fff" stroke-width="1.6"/>
<path d="M1971.5 27 V24 A4 4 0 0 1 1975.5 20 H1983.5 A4 4 0 0 1 1987.5 24 V27" fill="none" stroke="#fff" stroke-width="1.6"/>
</svg>
<div class="t" style="left:55px;top:999px;font-size:13px;font-weight:bold;color:#f4f4f4">IBM Cognos Analytics with Watson</div>
<div class="t" style="left:358px;top:999px;font-size:13.3px;color:#f4f4f4">Query and Analy ... in Dashboard</div>
<div class="t" style="left:1585px;top:1000px;font-size:13.5px;color:#8d8d8d">Search content</div>
<!-- toolbar -->
<div class="a" style="left:0;top:1065px;width:2000px;height:1px;background:#e0e0e0"></div>
<div class="a" style="left:1809px;top:1028px;width:83px;height:37px;background:#e0e0e0"></div>
<svg class="a" style="left:0;top:1028px" width="2000" height="38">
<g fill="#e0e0e0"><rect x="44" y="0" width="1" height="38"/><rect x="137" y="0" width="1" height="38"/><rect x="188" y="0" width="1" height="38"/><rect x="225" y="0" width="1" height="38"/><rect x="297" y="0" width="1" height="38"/></g>
<!-- comment -->
<path d="M14.5 13.5 H27.5 V23.5 H22 L19 26.5 V23.5 H14.5 Z" fill="none" stroke="#393939" stroke-width="1.4" stroke-linejoin="round"/>
<path d="M17.5 18.5 H18.5 M20.5 18.5 H21.5 M23.5 18.5 H24.5" stroke="#393939" stroke-width="1.6"/>
<!-- toggle -->
<rect x="60" y="11" width="30" height="15" rx="7.5" fill="#24a148"/>
<circle cx="82.5" cy="18.5" r="5.8" fill="#fff"/>
<path d="M79.8 18.6 L81.8 20.6 L85.2 16.8" stroke="#24a148" stroke-width="1.5" fill="none"/>
<!-- save -->
<path d="M146.5 11.5 H155.5 L158.5 14.5 V25.5 H146.5 Z" fill="none" stroke="#393939" stroke-width="1.4"/>
<rect x="149.5" y="11.5" width="6" height="4" fill="none" stroke="#393939" stroke-width="1.2"/><rect x="149.5" y="19.5" width="6" height="6" fill="none" stroke="#393939" stroke-width="1.2"/>
<path d="M172.5 16 L177 20.5 L181.5 16" stroke="#393939" stroke-width="1.4" fill="none"/>
<!-- share -->
<circle cx="203" cy="18.5" r="2.6" fill="none" stroke="#393939" stroke-width="1.4"/><circle cx="211" cy="13.5" r="2.6" fill="none" stroke="#393939" stroke-width="1.4"/><circle cx="211" cy="24" r="2.6" fill="none" stroke="#393939" stroke-width="1.4"/>
<path d="M205.3 17.2 L208.7 15 M205.3 19.8 L208.7 22.3" stroke="#393939" stroke-width="1.3"/>
<!-- undo / redo -->
<path d="M241 16.5 H247 A3.5 3.5 0 0 1 247 23.5 H243" stroke="#393939" stroke-width="1.4" fill="none"/><path d="M243.5 13.5 L240.5 16.5 L243.5 19.5" stroke="#393939" stroke-width="1.4" fill="none"/>
<path d="M282 16.5 H276 A3.5 3.5 0 0 0 276 23.5 H280" stroke="#c6c6c6" stroke-width="1.4" fill="none"/><path d="M279.5 13.5 L282.5 16.5 L279.5 19.5" stroke="#c6c6c6" stroke-width="1.4" fill="none"/>
<!-- expand -->
<path d="M310.5 25.5 L323 13 M317.5 12.5 H323.5 V18.5 M310.5 19.5 V25.5 H316.5" stroke="#393939" stroke-width="1.4" fill="none"/>
<!-- link gray -->
<circle cx="349.5" cy="14" r="3" fill="none" stroke="#c6c6c6" stroke-width="1.3"/><circle cx="356" cy="22" r="3" fill="#c6c6c6"/><path d="M351.5 16.5 L354 19.5" stroke="#c6c6c6" stroke-width="1.3"/>
<!-- crosstab table icon -->
<rect x="442.5" y="12.5" width="14" height="12" fill="none" stroke="#393939" stroke-width="1.3"/>
<path d="M442.5 15.5 H456.5 M442.5 18.5 H456.5 M442.5 21.5 H456.5 M446.5 12.5 V24.5 M450.5 12.5 V24.5" stroke="#393939" stroke-width="1"/>
<!-- target icon -->
<circle cx="486" cy="18.5" r="6.2" fill="none" stroke="#393939" stroke-width="1.3"/><path d="M486 14 L490.5 18.5 L486 23 L481.5 18.5 Z" fill="none" stroke="#393939" stroke-width="1.2"/><circle cx="486" cy="18.5" r="1.3" fill="#393939"/>
<!-- refresh dot -->
<path d="M518 14.5 A6.2 6.2 0 1 0 522.5 12.3" stroke="#393939" stroke-width="1.4" fill="none"/><path d="M516.5 12 L518.5 14.8 L515.5 15.8" stroke="#393939" stroke-width="1.2" fill="none"/><circle cx="523" cy="18.5" r="2.5" fill="#393939"/>
<!-- grid -->
<rect x="552.5" y="12.5" width="12" height="12" fill="none" stroke="#393939" stroke-width="1.3"/><path d="M552.5 16.5 H564.5 M552.5 20.5 H564.5 M556.5 12.5 V24.5 M560.5 12.5 V24.5" stroke="#393939" stroke-width="1"/>
<!-- swap -->
<path d="M588 15.5 H600 M597 12.5 L600 15.5 L597 18.5 M600 21.5 H588 M591 18.5 L588 21.5 L591 24.5" stroke="#393939" stroke-width="1.4" fill="none"/>
<!-- sigma box -->
<rect x="623.5" y="12" width="13" height="13" fill="none" stroke="#393939" stroke-width="1.3"/><path d="M633 15 H627 L630 18.5 L627 22 H633" stroke="#393939" stroke-width="1.1" fill="none"/>
<!-- eye gray -->
<path d="M659 18.5 Q666 11 673 18.5 Q666 26 659 18.5 Z" fill="none" stroke="#d0d0d0" stroke-width="1.3"/><circle cx="666" cy="18.5" r="2.5" fill="none" stroke="#d0d0d0" stroke-width="1.2"/>
<!-- table dot -->
<rect x="695.5" y="12.5" width="12" height="11" fill="none" stroke="#393939" stroke-width="1.3"/><path d="M695.5 16 H707.5 M695.5 19.5 H703 M700 12.5 V23.5" stroke="#393939" stroke-width="1"/><circle cx="706.5" cy="23" r="2.5" fill="#393939"/>
<!-- pin -->
<path d="M731 25.5 L736 20.5 M733.5 17.5 L739.5 23.5 L740.5 20 L744 16.5 L738.5 11 L735 14.5 Z" fill="none" stroke="#393939" stroke-width="1.3" stroke-linejoin="round"/>
<!-- copy gray -->
<rect x="770.5" y="14.5" width="10" height="11" fill="none" stroke="#d0d0d0" stroke-width="1.2"/><path d="M767.5 22 V11.5 H777" stroke="#d0d0d0" stroke-width="1.2" fill="none"/>
<!-- trash -->
<path d="M803.5 14.5 H815.5 M807 14.5 V12 H812 V14.5 M805 14.5 V25.5 H814 V14.5 M808 17 V23 M811 17 V23" stroke="#393939" stroke-width="1.3" fill="none"/>
<!-- right tabs icons -->
<path d="M1697.5 11.5 V25.5 H1711.5 M1700 22 L1704 17 L1707 19.5 L1711 14" stroke="#4a7fd8" stroke-width="1.3" fill="none"/>
<path d="M1782.5 12.5 H1796.5 L1791.5 18.5 V24.5 L1787.5 22.5 V18.5 Z" fill="none" stroke="#4a7fd8" stroke-width="1.3" stroke-linejoin="round"/><circle cx="1793" cy="21" r="2" fill="#4a7fd8"/>
<rect x="1866" y="12" width="14" height="13" fill="#3d74d8"/><rect x="1868" y="16" width="10" height="2" fill="#e0e0e0"/><rect x="1868" y="20" width="10" height="2" fill="#e0e0e0"/>
<path d="M1975.5 15 H1988.5 M1975.5 22 H1988.5" stroke="#4a7fd8" stroke-width="1.3"/><circle cx="1984" cy="15" r="2" fill="#fff" stroke="#4a7fd8" stroke-width="1.2"/><circle cx="1979" cy="22" r="2" fill="#fff" stroke="#4a7fd8" stroke-width="1.2"/>
</svg>
<div class="t" style="left:102px;top:1040px;font-size:13px;color:#393939">Edit</div>
<div class="t" style="left:381px;top:1040px;font-size:13.1px;color:#393939">Crosstab</div>
<div class="t" style="left:1634px;top:1040px;font-size:13.6px;color:#3d74d8">Analytics</div>
<div class="t" style="left:1736px;top:1040px;font-size:13.6px;color:#3d74d8">Filters</div>
<div class="t" style="left:1821px;top:1040px;font-size:13.6px;color:#3d74d8">Fields</div>
<div class="t" style="left:1905px;top:1040px;font-size:13.7px;color:#3d74d8">Properties</div>
<div class="a" style="left:44px;top:1066px;width:1px;height:845px;background:#e0e0e0"></div>
<div class="a" style="left:0;top:1066px;width:44px;height:45px;background:#e0e0e0"></div>
<div class="a" style="left:0;top:1066px;width:3px;height:45px;background:#0f62fe"></div>
<div class="t" style="left:60px;top:1086px;font-size:13.4px;color:#4589ff">Selected sources</div>
<div class="t" style="left:172px;top:1086px;font-size:13.4px;color:#6f6f6f">/</div>
<div class="t" style="left:60px;top:1118px;font-size:13px;font-weight:bold;color:#262626">GO Sales (analysis)</div>
<div class="a" style="left:60px;top:1148px;width:285px;height:30px;background:#f4f4f4;border-bottom:1px solid #8d8d8d;box-sizing:border-box"></div>
<div class="t" style="left:90px;top:1156px;font-size:13px;color:#8d8d8d">Search</div>
<div class="a" style="left:335px;top:1187px;width:17px;height:724px;background:#f0f0f0"></div>
<div class="a" style="left:336px;top:1205px;width:13px;height:706px;background:#c1c1c1"></div>
<div class="a" style="left:361px;top:1066px;width:6px;height:845px;background:#e0e0e0"></div>
<div class="a" style="left:363px;top:1506px;width:1px;height:15px;background:#393939"></div>
<div class="a" style="left:365px;top:1506px;width:1px;height:15px;background:#393939"></div>
<div class="t" style="left:122.4px;top:1195.5px;font-size:13.1px;color:#454545">Inventory (analysis)</div>
<div class="t" style="left:122.4px;top:1225.5px;font-size:13.1px;color:#454545">Product forecast (analysis)</div>
<div class="t" style="left:122.4px;top:1255.5px;font-size:13.1px;color:#454545">Returned items (analysis)</div>
<div class="t" style="left:122.4px;top:1285.5px;font-size:13.1px;color:#454545">Sales (analysis)</div>
<div class="t" style="left:137.5px;top:1315.5px;font-size:13.1px;color:#454545">Sales</div>
<div class="t" style="left:152.5px;top:1345.5px;font-size:13.1px;color:#454545">Quantity</div>
<div class="t" style="left:152.5px;top:1375.5px;font-size:13.1px;color:#454545">Unit cost</div>
<div class="t" style="left:152.5px;top:1405.5px;font-size:13.1px;color:#454545">Unit price</div>
<div class="t" style="left:152.5px;top:1435.5px;font-size:13.1px;color:#454545">Unit sale price</div>
<div class="t" style="left:152.5px;top:1465.5px;font-size:13.1px;color:#454545">Revenue</div>
<div class="t" style="left:152.5px;top:1495.5px;font-size:13.1px;color:#454545">Product cost</div>
<div class="t" style="left:152.5px;top:1525.5px;font-size:13.1px;color:#454545">Gross profit</div>
<div class="t" style="left:152.5px;top:1555.5px;font-size:13.1px;color:#454545">Planned revenue</div>
<div class="t" style="left:137.5px;top:1585.5px;font-size:13.1px;color:#454545">Margin</div>
<div class="t" style="left:137.5px;top:1615.5px;font-size:13.1px;color:#454545">Branch</div>
<div class="t" style="left:137.5px;top:1645.5px;font-size:13.1px;color:#454545">Order</div>
<div class="t" style="left:137.5px;top:1675.5px;font-size:13.1px;color:#454545">Order method</div>
<div class="t" style="left:137.5px;top:1705.5px;font-size:13.1px;color:#454545">Products</div>
<div class="t" style="left:137.5px;top:1735.5px;font-size:13.1px;color:#454545">Retailer type</div>
<div class="t" style="left:137.5px;top:1765.5px;font-size:13.1px;color:#454545">Retailers</div>
<div class="t" style="left:137.5px;top:1795.5px;font-size:13.1px;color:#454545">Sales staff</div>
<div class="t" style="left:137.5px;top:1825.5px;font-size:13.1px;color:#454545">Time</div>
<div class="t" style="left:137.5px;top:1855.5px;font-size:13.1px;color:#454545">Time (close date)</div>
<div class="t" style="left:137.5px;top:1885.5px;font-size:13.1px;color:#454545">Time (ship date)</div>
<svg class="a" style="left:0;top:0" width="460" height="1920">
<rect x="14.5" y="1082.5" width="4" height="4" fill="none" stroke="#393939" stroke-width="1.2"/><path d="M18.5 1084.5 H21.5 V1098.5 H25 M21.5 1091 H25" stroke="#393939" stroke-width="1.2" fill="none"/><rect x="25.5" y="1088.5" width="5" height="4" fill="none" stroke="#393939" stroke-width="1.2"/><rect x="25.5" y="1095.5" width="5" height="5" fill="none" stroke="#393939" stroke-width="1.2"/>
<path d="M13 1142 L18.5 1136.5 M16 1133 L22 1139 L23 1135.5 L27 1131.5 L21.5 1126 L17.5 1130 Z" fill="none" stroke="#393939" stroke-width="1.3" stroke-linejoin="round"/>
<path d="M13.5 1171 V1187.5 H28.5 M16 1187.5 V1178.5 H19.5 V1187.5 M23.5 1187.5 V1173.5 H27 V1187.5" stroke="#393939" stroke-width="1.2" fill="none"/>
<path d="M13.5 1217 L17 1213.5 L28 1224.5 L24.5 1228 Z" fill="#fff" stroke="#393939" stroke-width="1.2" stroke-linejoin="round"/><path d="M13 1231.5 L14 1227 L24 1217 L27.5 1220.5 L17.5 1230.5 Z" fill="#fff" stroke="#393939" stroke-width="1.2" stroke-linejoin="round"/>
<path d="M13 1270.5 L17 1257 L21 1270.5 Z" fill="none" stroke="#393939" stroke-width="1.2"/><circle cx="23" cy="1266" r="5.5" fill="#fff" stroke="#393939" stroke-width="1.3"/><path d="M21.5 1263.5 V1268.5 L25 1266 Z" fill="#393939"/>
<path d="M296.5 1125.5 H304.5 M300.5 1121.5 V1129.5" stroke="#262626" stroke-width="1.3"/>
<circle cx="330.5" cy="1120.5" r="1.3" fill="#262626"/><circle cx="330.5" cy="1125.5" r="1.3" fill="#262626"/><circle cx="330.5" cy="1130.5" r="1.3" fill="#262626"/>
<circle cx="74" cy="1162" r="4.6" fill="none" stroke="#6f6f6f" stroke-width="1.3"/><path d="M77.3 1165.3 L81 1169" stroke="#6f6f6f" stroke-width="1.4"/>
<path d="M339 1200 L342.5 1196 L346 1200 Z" fill="#a8a8a8"/>
<path d="M83 1199 L88 1203 L83 1207 Z" fill="#161616"/>
<path d="M101.5 1197.5 H106 L107.5 1199 H114.5 V1209.5 H101.5 Z M101.5 1200.5 H114.5" fill="none" stroke="#33bdb2" stroke-width="1.2" stroke-linejoin="round"/>
<path d="M83 1229 L88 1233 L83 1237 Z" fill="#161616"/>
<path d="M101.5 1227.5 H106 L107.5 1229 H114.5 V1239.5 H101.5 Z M101.5 1230.5 H114.5" fill="none" stroke="#33bdb2" stroke-width="1.2" stroke-linejoin="round"/>
<path d="M83 1259 L88 1263 L83 1267 Z" fill="#161616"/>
<path d="M101.5 1257.5 H106 L107.5 1259 H114.5 V1269.5 H101.5 Z M101.5 1260.5 H114.5" fill="none" stroke="#33bdb2" stroke-width="1.2" stroke-linejoin="round"/>
<path d="M81 1291 L89 1291 L85 1295 Z" fill="#161616"/>
<path d="M101.5 1287.5 H106 L107.5 1289 H114.5 V1299.5 H101.5 Z M101.5 1290.5 H114.5" fill="none" stroke="#33bdb2" stroke-width="1.2" stroke-linejoin="round"/>
<path d="M94 1321 L102 1321 L98 1325 Z" fill="#161616"/>
<path d="M116.0 1316.5 H119.5 V1325.5 H129.0 V1329.5 H116.0 Z" fill="none" stroke="#33bdb2" stroke-width="1.2"/><path d="M117.8 1318.0 V1327.8 H128.0" stroke="#33bdb2" stroke-width="1" stroke-dasharray="1 1" fill="none"/>
<path d="M131.0 1346.5 H134.5 V1355.5 H144.0 V1359.5 H131.0 Z" fill="none" stroke="#33bdb2" stroke-width="1.2"/><path d="M132.8 1348.0 V1357.8 H143.0" stroke="#33bdb2" stroke-width="1" stroke-dasharray="1 1" fill="none"/>
<path d="M131.0 1376.5 H134.5 V1385.5 H144.0 V1389.5 H131.0 Z" fill="none" stroke="#33bdb2" stroke-width="1.2"/><path d="M132.8 1378.0 V1387.8 H143.0" stroke="#33bdb2" stroke-width="1" stroke-dasharray="1 1" fill="none"/>
<path d="M131.0 1406.5 H134.5 V1415.5 H144.0 V1419.5 H131.0 Z" fill="none" stroke="#33bdb2" stroke-width="1.2"/><path d="M132.8 1408.0 V1417.8 H143.0" stroke="#33bdb2" stroke-width="1" stroke-dasharray="1 1" fill="none"/>
<path d="M131.0 1436.5 H134.5 V1445.5 H144.0 V1449.5 H131.0 Z" fill="none" stroke="#33bdb2" stroke-width="1.2"/><path d="M132.8 1438.0 V1447.8 H143.0" stroke="#33bdb2" stroke-width="1" stroke-dasharray="1 1" fill="none"/>
<path d="M131.0 1466.5 H134.5 V1475.5 H144.0 V1479.5 H131.0 Z" fill="none" stroke="#33bdb2" stroke-width="1.2"/><path d="M132.8 1468.0 V1477.8 H143.0" stroke="#33bdb2" stroke-width="1" stroke-dasharray="1 1" fill="none"/>
<path d="M131.0 1496.5 H134.5 V1505.5 H144.0 V1509.5 H131.0 Z" fill="none" stroke="#33bdb2" stroke-width="1.2"/><path d="M132.8 1498.0 V1507.8 H143.0" stroke="#33bdb2" stroke-width="1" stroke-dasharray="1 1" fill="none"/>
<path d="M131.0 1526.5 H134.5 V1535.5 H144.0 V1539.5 H131.0 Z" fill="none" stroke="#33bdb2" stroke-width="1.2"/><path d="M132.8 1528.0 V1537.8 H143.0" stroke="#33bdb2" stroke-width="1" stroke-dasharray="1 1" fill="none"/>
<path d="M131.0 1556.5 H134.5 V1565.5 H144.0 V1569.5 H131.0 Z" fill="none" stroke="#33bdb2" stroke-width="1.2"/><path d="M132.8 1558.0 V1567.8 H143.0" stroke="#33bdb2" stroke-width="1" stroke-dasharray="1 1" fill="none"/>
<rect x="115.5" y="1586.5" width="13" height="13" fill="none" stroke="#33bdb2" stroke-width="1.2"/><path d="M115.5 1590.5 H128.5 M115.5 1594.5 H122 M122 1586.5 V1599.5 M118 1597 H120" stroke="#33bdb2" stroke-width="1"/>
<path d="M96 1619 L101 1623 L96 1627 Z" fill="#161616"/>
<circle cx="122" cy="1618.5" r="1.8" fill="#33bdb2"/><circle cx="117" cy="1628" r="1.8" fill="#33bdb2"/><circle cx="127" cy="1628" r="1.8" fill="#33bdb2"/><path d="M122 1619 V1624 L117 1628 M122 1624 L127 1628" stroke="#33bdb2" stroke-width="1.2" fill="none"/>
<path d="M96 1649 L101 1653 L96 1657 Z" fill="#161616"/>
<circle cx="122" cy="1648.5" r="1.8" fill="#33bdb2"/><circle cx="117" cy="1658" r="1.8" fill="#33bdb2"/><circle cx="127" cy="1658" r="1.8" fill="#33bdb2"/><path d="M122 1649 V1654 L117 1658 M122 1654 L127 1658" stroke="#33bdb2" stroke-width="1.2" fill="none"/>
<path d="M96 1679 L101 1683 L96 1687 Z" fill="#161616"/>
<circle cx="122" cy="1678.5" r="1.8" fill="#33bdb2"/><circle cx="117" cy="1688" r="1.8" fill="#33bdb2"/><circle cx="127" cy="1688" r="1.8" fill="#33bdb2"/><path d="M122 1679 V1684 L117 1688 M122 1684 L127 1688" stroke="#33bdb2" stroke-width="1.2" fill="none"/>
<path d="M96 1709 L101 1713 L96 1717 Z" fill="#161616"/>
<circle cx="122" cy="1708.5" r="1.8" fill="#33bdb2"/><circle cx="117" cy="1718" r="1.8" fill="#33bdb2"/><circle cx="127" cy="1718" r="1.8" fill="#33bdb2"/><path d="M122 1709 V1714 L117 1718 M122 1714 L127 1718" stroke="#33bdb2" stroke-width="1.2" fill="none"/>
<path d="M96 1739 L101 1743 L96 1747 Z" fill="#161616"/>
<circle cx="122" cy="1738.5" r="1.8" fill="#33bdb2"/><circle cx="117" cy="1748" r="1.8" fill="#33bdb2"/><circle cx="127" cy="1748" r="1.8" fill="#33bdb2"/><path d="M122 1739 V1744 L117 1748 M122 1744 L127 1748" stroke="#33bdb2" stroke-width="1.2" fill="none"/>
<path d="M96 1769 L101 1773 L96 1777 Z" fill="#161616"/>
<circle cx="122" cy="1768.5" r="1.8" fill="#33bdb2"/><circle cx="117" cy="1778" r="1.8" fill="#33bdb2"/><circle cx="127" cy="1778" r="1.8" fill="#33bdb2"/><path d="M122 1769 V1774 L117 1778 M122 1774 L127 1778" stroke="#33bdb2" stroke-width="1.2" fill="none"/>
<path d="M96 1799 L101 1803 L96 1807 Z" fill="#161616"/>
<circle cx="122" cy="1798.5" r="1.8" fill="#33bdb2"/><circle cx="117" cy="1808" r="1.8" fill="#33bdb2"/><circle cx="127" cy="1808" r="1.8" fill="#33bdb2"/><path d="M122 1799 V1804 L117 1808 M122 1804 L127 1808" stroke="#33bdb2" stroke-width="1.2" fill="none"/>
<path d="M96 1829 L101 1833 L96 1837 Z" fill="#161616"/>
<circle cx="122" cy="1828.5" r="1.8" fill="#33bdb2"/><circle cx="117" cy="1838" r="1.8" fill="#33bdb2"/><circle cx="127" cy="1838" r="1.8" fill="#33bdb2"/><path d="M122 1829 V1834 L117 1838 M122 1834 L127 1838" stroke="#33bdb2" stroke-width="1.2" fill="none"/>
<path d="M96 1859 L101 1863 L96 1867 Z" fill="#161616"/>
<circle cx="122" cy="1858.5" r="1.8" fill="#33bdb2"/><circle cx="117" cy="1868" r="1.8" fill="#33bdb2"/><circle cx="127" cy="1868" r="1.8" fill="#33bdb2"/><path d="M122 1859 V1864 L117 1868 M122 1864 L127 1868" stroke="#33bdb2" stroke-width="1.2" fill="none"/>
<path d="M96 1889 L101 1893 L96 1897 Z" fill="#161616"/>
<circle cx="122" cy="1888.5" r="1.8" fill="#33bdb2"/><circle cx="117" cy="1898" r="1.8" fill="#33bdb2"/><circle cx="127" cy="1898" r="1.8" fill="#33bdb2"/><path d="M122 1889 V1894 L117 1898 M122 1894 L127 1898" stroke="#33bdb2" stroke-width="1.2" fill="none"/>
</svg>
<div class="t" style="left:407px;top:1105.5px;font-size:14.9px;color:#393939">Revenue, Planned revenue and Margin for Year, Order method and Product line</div>
<div class="a" style="left:677px;top:1130px;width:973px;height:61px;background:#f4f4f4"></div>
<div class="t" style="left:723px;top:1141.5px;font-size:12px;color:#262626">2011</div>
<div class="t" style="left:1026px;top:1141.5px;font-size:12px;color:#262626">2012</div>
<div class="t" style="left:1295px;top:1140px;font-size:11.2px;font-weight:bold;color:#262626">Summary</div>
<div class="t" style="left:686px;top:1170px;font-size:11.2px;color:#393939">Revenue</div>
<div class="t" style="left:790px;top:1170px;font-size:11.2px;color:#393939">Planned revenue</div>
<div class="t" style="left:916px;top:1170px;font-size:11.2px;color:#393939">Margin</div>
<div class="t" style="left:988px;top:1170px;font-size:11.2px;color:#393939">Revenue</div>
<div class="t" style="left:1099.5px;top:1170px;font-size:11.2px;color:#393939">Planned revenue</div>
<div class="t" style="left:1225.5px;top:1170px;font-size:11.2px;color:#393939">Margin</div>
<div class="t" style="left:1295px;top:1170px;font-size:11.2px;color:#393939">Revenue</div>
<div class="t" style="left:1434px;top:1170px;font-size:11.2px;color:#393939">Planned revenue</div>
<div class="t" style="left:1571px;top:1170px;font-size:11.2px;color:#393939">Margin</div>
<div class="a" style="left:400px;top:1191px;width:86px;height:390px;background:#e0e0e0"></div>
<div class="a" style="left:400px;top:1581px;width:86px;height:330px;background:#f4f4f4"></div>
<div class="t" style="left:445.5px;top:1380.5px;font-size:11.3px;color:#393939">Fax</div>
<div class="t" style="left:445.5px;top:1770.5px;font-size:11.3px;color:#393939">Mail</div>
<div class="a" style="left:486px;top:1191px;width:191px;height:720px;background:#f4f4f4"></div>
<div class="a" style="left:1287px;top:1191px;width:363px;height:720px;background:#f4f4f4"></div>
<div class="t" style="left:531.4px;top:1200.5px;font-size:11.3px;color:#393939">Camping Equipment</div>
<div class="t" style="right:1225.3px;top:1200.5px;font-size:12px;color:#525252">$6,228,274.27</div>
<div class="t" style="right:1099.6px;top:1200.5px;font-size:12px;color:#525252">$6,648,325.17</div>
<div class="t" style="right:1049.6px;top:1200.5px;font-size:12px;color:#df3d4c">38%</div>
<div class="t" style="right:915px;top:1200.5px;font-size:12px;color:#525252">$5,226,451.57</div>
<div class="t" style="right:789.5px;top:1200.5px;font-size:12px;color:#525252">$5,535,230.50</div>
<div class="t" style="right:742.4000000000001px;top:1200.5px;font-size:12px;color:#df3d4c">38%</div>
<div class="t" style="right:581.5px;top:1200.5px;font-size:12.2px;font-weight:bold;color:#393939">$11,454,725.84</div>
<div class="t" style="right:444px;top:1200.5px;font-size:12.2px;font-weight:bold;color:#393939">$12,183,555.67</div>
<div class="t" style="right:358px;top:1200.5px;font-size:12.2px;font-weight:bold;color:#393939">38%</div>
<div class="t" style="left:531.4px;top:1230.5px;font-size:11.3px;color:#393939">Golf Equipment</div>
<div class="t" style="right:1225.3px;top:1230.5px;font-size:12px;color:#525252">$3,539,563.59</div>
<div class="t" style="right:1099.6px;top:1230.5px;font-size:12px;color:#525252">$3,801,230.18</div>
<div class="t" style="right:1049.6px;top:1230.5px;font-size:12px;color:#2e7d46">47%</div>
<div class="t" style="right:915px;top:1230.5px;font-size:12px;color:#525252">$2,408,222.14</div>
<div class="t" style="right:789.5px;top:1230.5px;font-size:12px;color:#525252">$2,570,526.95</div>
<div class="t" style="right:742.4000000000001px;top:1230.5px;font-size:12px;color:#2e7d46">51%</div>
<div class="t" style="right:581.5px;top:1230.5px;font-size:12.2px;font-weight:bold;color:#393939">$5,947,785.73</div>
<div class="t" style="right:444px;top:1230.5px;font-size:12.2px;font-weight:bold;color:#393939">$6,371,757.13</div>
<div class="t" style="right:358px;top:1230.5px;font-size:12.2px;font-weight:bold;color:#393939">49%</div>
<div class="t" style="left:531.4px;top:1260.5px;font-size:11.3px;color:#393939">Mountaineering Equipment</div>
<div class="t" style="right:1225.3px;top:1260.5px;font-size:12px;color:#525252">$6,129,791.95</div>
<div class="t" style="right:1099.6px;top:1260.5px;font-size:12px;color:#525252">$6,488,382.20</div>
<div class="t" style="right:1049.6px;top:1260.5px;font-size:12px;color:#df3d4c">40%</div>
<div class="t" style="right:915px;top:1260.5px;font-size:12px;color:#525252">$3,538,047.25</div>
<div class="t" style="right:789.5px;top:1260.5px;font-size:12px;color:#525252">$3,699,644.10</div>
<div class="t" style="right:742.4000000000001px;top:1260.5px;font-size:12px;color:#2e7d46">41%</div>
<div class="t" style="right:581.5px;top:1260.5px;font-size:12.2px;font-weight:bold;color:#393939">$9,667,839.20</div>
<div class="t" style="right:444px;top:1260.5px;font-size:12.2px;font-weight:bold;color:#393939">$10,188,026.30</div>
<div class="t" style="right:358px;top:1260.5px;font-size:12.2px;font-weight:bold;color:#393939">40%</div>
<div class="t" style="left:554.3px;top:1290.5px;font-size:11.3px;color:#393939">Climbing Accessories</div>
<div class="t" style="right:1225.3px;top:1290.5px;font-size:12px;color:#525252">$1,467,741.38</div>
<div class="t" style="right:1099.6px;top:1290.5px;font-size:12px;color:#525252">$1,540,327.29</div>
<div class="t" style="right:1049.6px;top:1290.5px;font-size:12px;color:#2e7d46">50%</div>
<div class="t" style="right:915px;top:1290.5px;font-size:12px;color:#525252">$695,895.15</div>
<div class="t" style="right:789.5px;top:1290.5px;font-size:12px;color:#525252">$720,355.23</div>
<div class="t" style="right:742.4000000000001px;top:1290.5px;font-size:12px;color:#2e7d46">51%</div>
<div class="t" style="right:581.5px;top:1290.5px;font-size:12.2px;font-weight:bold;color:#393939">$2,163,636.53</div>
<div class="t" style="right:444px;top:1290.5px;font-size:12.2px;font-weight:bold;color:#393939">$2,260,682.52</div>
<div class="t" style="right:358px;top:1290.5px;font-size:12.2px;font-weight:bold;color:#393939">51%</div>
<div class="t" style="left:554.3px;top:1320.5px;font-size:11.3px;color:#393939">Rope</div>
<div class="t" style="right:1225.3px;top:1320.5px;font-size:12px;color:#525252">$1,574,660.60</div>
<div class="t" style="right:1099.6px;top:1320.5px;font-size:12px;color:#525252">$1,674,989.20</div>
<div class="t" style="right:1049.6px;top:1320.5px;font-size:12px;color:#df3d4c">31%</div>
<div class="t" style="right:915px;top:1320.5px;font-size:12px;color:#525252">$686,060.30</div>
<div class="t" style="right:789.5px;top:1320.5px;font-size:12px;color:#525252">$722,166.92</div>
<div class="t" style="right:742.4000000000001px;top:1320.5px;font-size:12px;color:#df3d4c">32%</div>
<div class="t" style="right:581.5px;top:1320.5px;font-size:12.2px;font-weight:bold;color:#393939">$2,260,720.90</div>
<div class="t" style="right:444px;top:1320.5px;font-size:12.2px;font-weight:bold;color:#393939">$2,397,156.12</div>
<div class="t" style="right:358px;top:1320.5px;font-size:12.2px;font-weight:bold;color:#393939">31%</div>
<div class="t" style="left:576.6px;top:1350.5px;font-size:11.3px;color:#393939">Husky Rope 100</div>
<div class="t" style="right:1225.3px;top:1350.5px;font-size:12px;color:#525252">$568,625.70</div>
<div class="t" style="right:1099.6px;top:1350.5px;font-size:12px;color:#525252">$604,921.70</div>
<div class="t" style="right:1049.6px;top:1350.5px;font-size:12px;color:#df3d4c">30%</div>
<div class="t" style="right:915px;top:1350.5px;font-size:12px;color:#525252">$235,141.62</div>
<div class="t" style="right:789.5px;top:1350.5px;font-size:12px;color:#525252">$247,515.24</div>
<div class="t" style="right:742.4000000000001px;top:1350.5px;font-size:12px;color:#df3d4c">31%</div>
<div class="t" style="right:581.5px;top:1350.5px;font-size:12.2px;font-weight:bold;color:#393939">$803,767.32</div>
<div class="t" style="right:444px;top:1350.5px;font-size:12.2px;font-weight:bold;color:#393939">$852,436.94</div>
<div class="t" style="right:358px;top:1350.5px;font-size:12.2px;font-weight:bold;color:#393939">30%</div>
<div class="t" style="left:576.6px;top:1380.5px;font-size:11.3px;color:#393939">Husky Rope 200</div>
<div class="t" style="right:1225.3px;top:1380.5px;font-size:12px;color:#525252">$473,092.50</div>
<div class="t" style="right:1099.6px;top:1380.5px;font-size:12px;color:#525252">$503,107.50</div>
<div class="t" style="right:1049.6px;top:1380.5px;font-size:12px;color:#df3d4c">32%</div>
<div class="t" style="right:915px;top:1380.5px;font-size:12px;color:#525252">$227,231.68</div>
<div class="t" style="right:789.5px;top:1380.5px;font-size:12px;color:#525252">$239,191.68</div>
<div class="t" style="right:742.4000000000001px;top:1380.5px;font-size:12px;color:#df3d4c">32%</div>
<div class="t" style="right:581.5px;top:1380.5px;font-size:12.2px;font-weight:bold;color:#393939">$700,324.18</div>
<div class="t" style="right:444px;top:1380.5px;font-size:12.2px;font-weight:bold;color:#393939">$742,299.18</div>
<div class="t" style="right:358px;top:1380.5px;font-size:12.2px;font-weight:bold;color:#393939">32%</div>
<div class="t" style="left:576.6px;top:1410.5px;font-size:11.3px;color:#393939">Husky Rope 50</div>
<div class="t" style="right:1225.3px;top:1410.5px;font-size:12px;color:#525252">$342,912.00</div>
<div class="t" style="right:1099.6px;top:1410.5px;font-size:12px;color:#525252">$364,800.00</div>
<div class="t" style="right:1049.6px;top:1410.5px;font-size:12px;color:#df3d4c">33%</div>
<div class="t" style="right:915px;top:1410.5px;font-size:12px;color:#525252">$148,960.00</div>
<div class="t" style="right:789.5px;top:1410.5px;font-size:12px;color:#525252">$156,800.00</div>
<div class="t" style="right:742.4000000000001px;top:1410.5px;font-size:12px;color:#df3d4c">34%</div>
<div class="t" style="right:581.5px;top:1410.5px;font-size:12.2px;font-weight:bold;color:#393939">$491,872.00</div>
<div class="t" style="right:444px;top:1410.5px;font-size:12.2px;font-weight:bold;color:#393939">$521,600.00</div>
<div class="t" style="right:358px;top:1410.5px;font-size:12.2px;font-weight:bold;color:#393939">33%</div>
<div class="t" style="left:576.6px;top:1440.5px;font-size:11.3px;color:#393939">Husky Rope 60</div>
<div class="t" style="right:1225.3px;top:1440.5px;font-size:12px;color:#525252">$190,030.40</div>
<div class="t" style="right:1099.6px;top:1440.5px;font-size:12px;color:#525252">$202,160.00</div>
<div class="t" style="right:1049.6px;top:1440.5px;font-size:12px;color:#df3d4c">29%</div>
<div class="t" style="right:915px;top:1440.5px;font-size:12px;color:#525252">$74,727.00</div>
<div class="t" style="right:789.5px;top:1440.5px;font-size:12px;color:#525252">$78,660.00</div>
<div class="t" style="right:742.4000000000001px;top:1440.5px;font-size:12px;color:#df3d4c">30%</div>
<div class="t" style="right:581.5px;top:1440.5px;font-size:12.2px;font-weight:bold;color:#393939">$264,757.40</div>
<div class="t" style="right:444px;top:1440.5px;font-size:12.2px;font-weight:bold;color:#393939">$280,820.00</div>
<div class="t" style="right:358px;top:1440.5px;font-size:12.2px;font-weight:bold;color:#393939">29%</div>
<div class="t" style="left:554.3px;top:1470.5px;font-size:11.3px;color:#393939">Safety</div>
<div class="t" style="right:1225.3px;top:1470.5px;font-size:12px;color:#525252">$1,241,422.86</div>
<div class="t" style="right:1099.6px;top:1470.5px;font-size:12px;color:#525252">$1,329,633.00</div>
<div class="t" style="right:1049.6px;top:1470.5px;font-size:12px;color:#df3d4c">37%</div>
<div class="t" style="right:915px;top:1470.5px;font-size:12px;color:#525252">$750,310.65</div>
<div class="t" style="right:789.5px;top:1470.5px;font-size:12px;color:#525252">$787,944.00</div>
<div class="t" style="right:742.4000000000001px;top:1470.5px;font-size:12px;color:#df3d4c">36%</div>
<div class="t" style="right:581.5px;top:1470.5px;font-size:12.2px;font-weight:bold;color:#393939">$1,991,733.51</div>
<div class="t" style="right:444px;top:1470.5px;font-size:12.2px;font-weight:bold;color:#393939">$2,117,577.00</div>
<div class="t" style="right:358px;top:1470.5px;font-size:12.2px;font-weight:bold;color:#393939">37%</div>
<div class="t" style="left:554.3px;top:1500.5px;font-size:11.3px;color:#393939">Tools</div>
<div class="t" style="right:1225.3px;top:1500.5px;font-size:12px;color:#525252">$1,845,967.11</div>
<div class="t" style="right:1099.6px;top:1500.5px;font-size:12px;color:#525252">$1,943,432.71</div>
<div class="t" style="right:1049.6px;top:1500.5px;font-size:12px;color:#2e7d46">41%</div>
<div class="t" style="right:915px;top:1500.5px;font-size:12px;color:#525252">$1,405,781.15</div>
<div class="t" style="right:789.5px;top:1500.5px;font-size:12px;color:#525252">$1,469,177.95</div>
<div class="t" style="right:742.4000000000001px;top:1500.5px;font-size:12px;color:#2e7d46">43%</div>
<div class="t" style="right:581.5px;top:1500.5px;font-size:12.2px;font-weight:bold;color:#393939">$3,251,748.26</div>
<div class="t" style="right:444px;top:1500.5px;font-size:12.2px;font-weight:bold;color:#393939">$3,412,610.66</div>
<div class="t" style="right:358px;top:1500.5px;font-size:12.2px;font-weight:bold;color:#393939">42%</div>
<div class="t" style="left:531.4px;top:1530.5px;font-size:11.3px;color:#393939">Outdoor Protection</div>
<div class="t" style="right:1225.3px;top:1530.5px;font-size:12px;color:#525252">$385,329.20</div>
<div class="t" style="right:1099.6px;top:1530.5px;font-size:12px;color:#525252">$405,413.96</div>
<div class="t" style="right:1049.6px;top:1530.5px;font-size:12px;color:#2e7d46">62%</div>
<div class="t" style="right:915px;top:1530.5px;font-size:12px;color:#525252">$123,028.48</div>
<div class="t" style="right:789.5px;top:1530.5px;font-size:12px;color:#525252">$133,678.84</div>
<div class="t" style="right:742.4000000000001px;top:1530.5px;font-size:12px;color:#2e7d46">60%</div>
<div class="t" style="right:581.5px;top:1530.5px;font-size:12.2px;font-weight:bold;color:#393939">$508,357.68</div>
<div class="t" style="right:444px;top:1530.5px;font-size:12.2px;font-weight:bold;color:#393939">$539,092.80</div>
<div class="t" style="right:358px;top:1530.5px;font-size:12.2px;font-weight:bold;color:#393939">61%</div>
<div class="t" style="left:531.4px;top:1560.5px;font-size:11.3px;color:#393939">Personal Accessories</div>
<div class="t" style="right:1225.3px;top:1560.5px;font-size:12px;color:#525252">$3,613,228.75</div>
<div class="t" style="right:1099.6px;top:1560.5px;font-size:12px;color:#525252">$3,705,173.91</div>
<div class="t" style="right:1049.6px;top:1560.5px;font-size:12px;color:#2e7d46">41%</div>
<div class="t" style="right:915px;top:1560.5px;font-size:12px;color:#525252">$2,149,810.49</div>
<div class="t" style="right:789.5px;top:1560.5px;font-size:12px;color:#525252">$2,256,538.98</div>
<div class="t" style="right:742.4000000000001px;top:1560.5px;font-size:12px;color:#2e7d46">41%</div>
<div class="t" style="right:581.5px;top:1560.5px;font-size:12.2px;font-weight:bold;color:#393939">$5,763,039.24</div>
<div class="t" style="right:444px;top:1560.5px;font-size:12.2px;font-weight:bold;color:#393939">$5,961,712.89</div>
<div class="t" style="right:358px;top:1560.5px;font-size:12.2px;font-weight:bold;color:#393939">41%</div>
<div class="t" style="left:531.4px;top:1590.5px;font-size:11.3px;color:#393939">Camping Equipment</div>
<div class="t" style="right:1225.3px;top:1590.5px;font-size:12px;color:#525252">$8,846,759.96</div>
<div class="t" style="right:1099.6px;top:1590.5px;font-size:12px;color:#525252">$9,523,088.56</div>
<div class="t" style="right:1049.6px;top:1590.5px;font-size:12px;color:#df3d4c">36%</div>
<div class="t" style="right:915px;top:1590.5px;font-size:12px;color:#525252">$2,482,266.26</div>
<div class="t" style="right:789.5px;top:1590.5px;font-size:12px;color:#525252">$2,657,319.18</div>
<div class="t" style="right:742.4000000000001px;top:1590.5px;font-size:12px;color:#df3d4c">38%</div>
<div class="t" style="right:581.5px;top:1590.5px;font-size:12.2px;font-weight:bold;color:#393939">$11,329,026.22</div>
<div class="t" style="right:444px;top:1590.5px;font-size:12.2px;font-weight:bold;color:#393939">$12,180,407.74</div>
<div class="t" style="right:358px;top:1590.5px;font-size:12.2px;font-weight:bold;color:#393939">36%</div>
<div class="t" style="left:531.4px;top:1620.5px;font-size:11.3px;color:#393939">Golf Equipment</div>
<div class="t" style="right:1225.3px;top:1620.5px;font-size:12px;color:#525252">$2,355,735.00</div>
<div class="t" style="right:1099.6px;top:1620.5px;font-size:12px;color:#525252">$2,522,366.25</div>
<div class="t" style="right:1049.6px;top:1620.5px;font-size:12px;color:#2e7d46">48%</div>
<div class="t" style="right:915px;top:1620.5px;font-size:12px;color:#525252">$1,941,144.70</div>
<div class="t" style="right:789.5px;top:1620.5px;font-size:12px;color:#525252">$2,051,268.98</div>
<div class="t" style="right:742.4000000000001px;top:1620.5px;font-size:12px;color:#2e7d46">51%</div>
<div class="t" style="right:581.5px;top:1620.5px;font-size:12.2px;font-weight:bold;color:#393939">$4,296,879.70</div>
<div class="t" style="right:444px;top:1620.5px;font-size:12.2px;font-weight:bold;color:#393939">$4,573,635.23</div>
<div class="t" style="right:358px;top:1620.5px;font-size:12.2px;font-weight:bold;color:#393939">49%</div>
<div class="t" style="left:531.4px;top:1650.5px;font-size:11.3px;color:#393939">Mountaineering Equipment</div>
<div class="t" style="right:1225.3px;top:1650.5px;font-size:12px;color:#525252">$2,497,183.28</div>
<div class="t" style="right:1099.6px;top:1650.5px;font-size:12px;color:#525252">$2,643,835.90</div>
<div class="t" style="right:1049.6px;top:1650.5px;font-size:12px;color:#df3d4c">39%</div>
<div class="t" style="right:915px;top:1650.5px;font-size:12px;color:#525252">$1,034,475.38</div>
<div class="t" style="right:789.5px;top:1650.5px;font-size:12px;color:#525252">$1,081,794.20</div>
<div class="t" style="right:742.4000000000001px;top:1650.5px;font-size:12px;color:#df3d4c">40%</div>
<div class="t" style="right:581.5px;top:1650.5px;font-size:12.2px;font-weight:bold;color:#393939">$3,531,658.66</div>
<div class="t" style="right:444px;top:1650.5px;font-size:12.2px;font-weight:bold;color:#393939">$3,725,630.10</div>
<div class="t" style="right:358px;top:1650.5px;font-size:12.2px;font-weight:bold;color:#393939">39%</div>
<div class="t" style="left:554.3px;top:1680.5px;font-size:11.3px;color:#393939">Climbing Accessories</div>
<div class="t" style="right:1225.3px;top:1680.5px;font-size:12px;color:#525252">$431,940.86</div>
<div class="t" style="right:1099.6px;top:1680.5px;font-size:12px;color:#525252">$453,687.44</div>
<div class="t" style="right:1049.6px;top:1680.5px;font-size:12px;color:#2e7d46">51%</div>
<div class="t" style="right:915px;top:1680.5px;font-size:12px;color:#525252">$247,356.71</div>
<div class="t" style="right:789.5px;top:1680.5px;font-size:12px;color:#525252">$255,060.77</div>
<div class="t" style="right:742.4000000000001px;top:1680.5px;font-size:12px;color:#2e7d46">52%</div>
<div class="t" style="right:581.5px;top:1680.5px;font-size:12.2px;font-weight:bold;color:#393939">$679,297.57</div>
<div class="t" style="right:444px;top:1680.5px;font-size:12.2px;font-weight:bold;color:#393939">$708,748.21</div>
<div class="t" style="right:358px;top:1680.5px;font-size:12.2px;font-weight:bold;color:#393939">51%</div>
<div class="t" style="left:554.3px;top:1710.5px;font-size:11.3px;color:#393939">Rope</div>
<div class="t" style="right:1225.3px;top:1710.5px;font-size:12px;color:#525252">$761,086.60</div>
<div class="t" style="right:1099.6px;top:1710.5px;font-size:12px;color:#525252">$809,667.50</div>
<div class="t" style="right:1049.6px;top:1710.5px;font-size:12px;color:#df3d4c">31%</div>
<div class="t" style="right:915px;top:1710.5px;font-size:12px;color:#525252">$372,823.40</div>
<div class="t" style="right:789.5px;top:1710.5px;font-size:12px;color:#525252">$392,444.56</div>
<div class="t" style="right:742.4000000000001px;top:1710.5px;font-size:12px;color:#df3d4c">32%</div>
<div class="t" style="right:581.5px;top:1710.5px;font-size:12.2px;font-weight:bold;color:#393939">$1,133,910.00</div>
<div class="t" style="right:444px;top:1710.5px;font-size:12.2px;font-weight:bold;color:#393939">$1,202,112.06</div>
<div class="t" style="right:358px;top:1710.5px;font-size:12.2px;font-weight:bold;color:#393939">31%</div>
<div class="t" style="left:576.6px;top:1740.5px;font-size:11.3px;color:#393939">Husky Rope 100</div>
<div class="t" style="right:1225.3px;top:1740.5px;font-size:12px;color:#525252">$284,801.64</div>
<div class="t" style="right:1099.6px;top:1740.5px;font-size:12px;color:#525252">$302,980.84</div>
<div class="t" style="right:1049.6px;top:1740.5px;font-size:12px;color:#df3d4c">30%</div>
<div class="t" style="right:915px;top:1740.5px;font-size:12px;color:#525252">$140,623.91</div>
<div class="t" style="right:789.5px;top:1740.5px;font-size:12px;color:#525252">$148,023.82</div>
<div class="t" style="right:742.4000000000001px;top:1740.5px;font-size:12px;color:#df3d4c">31%</div>
<div class="t" style="right:581.5px;top:1740.5px;font-size:12.2px;font-weight:bold;color:#393939">$425,425.55</div>
<div class="t" style="right:444px;top:1740.5px;font-size:12.2px;font-weight:bold;color:#393939">$451,004.66</div>
<div class="t" style="right:358px;top:1740.5px;font-size:12.2px;font-weight:bold;color:#393939">30%</div>
<div class="t" style="left:576.6px;top:1770.5px;font-size:11.3px;color:#393939">Husky Rope 200</div>
<div class="t" style="right:1225.3px;top:1770.5px;font-size:12px;color:#525252">$225,380.16</div>
<div class="t" style="right:1099.6px;top:1770.5px;font-size:12px;color:#525252">$239,766.66</div>
<div class="t" style="right:1049.6px;top:1770.5px;font-size:12px;color:#df3d4c">31%</div>
<div class="t" style="right:915px;top:1770.5px;font-size:12px;color:#525252">$116,346.99</div>
<div class="t" style="right:789.5px;top:1770.5px;font-size:12px;color:#525252">$122,470.74</div>
<div class="t" style="right:742.4000000000001px;top:1770.5px;font-size:12px;color:#df3d4c">32%</div>
<div class="t" style="right:581.5px;top:1770.5px;font-size:12.2px;font-weight:bold;color:#393939">$341,727.15</div>
<div class="t" style="right:444px;top:1770.5px;font-size:12.2px;font-weight:bold;color:#393939">$362,237.40</div>
<div class="t" style="right:358px;top:1770.5px;font-size:12.2px;font-weight:bold;color:#393939">32%</div>
<div class="t" style="left:576.6px;top:1800.5px;font-size:11.3px;color:#393939">Husky Rope 50</div>
<div class="t" style="right:1225.3px;top:1800.5px;font-size:12px;color:#525252">$151,603.20</div>
<div class="t" style="right:1099.6px;top:1800.5px;font-size:12px;color:#525252">$161,280.00</div>
<div class="t" style="right:1049.6px;top:1800.5px;font-size:12px;color:#df3d4c">33%</div>
<div class="t" style="right:915px;top:1800.5px;font-size:12px;color:#525252">$69,464.00</div>
<div class="t" style="right:789.5px;top:1800.5px;font-size:12px;color:#525252">$73,120.00</div>
<div class="t" style="right:742.4000000000001px;top:1800.5px;font-size:12px;color:#df3d4c">34%</div>
<div class="t" style="right:581.5px;top:1800.5px;font-size:12.2px;font-weight:bold;color:#393939">$221,067.20</div>
<div class="t" style="right:444px;top:1800.5px;font-size:12.2px;font-weight:bold;color:#393939">$234,400.00</div>
<div class="t" style="right:358px;top:1800.5px;font-size:12.2px;font-weight:bold;color:#393939">33%</div>
<div class="t" style="left:576.6px;top:1830.5px;font-size:11.3px;color:#393939">Husky Rope 60</div>
<div class="t" style="right:1225.3px;top:1830.5px;font-size:12px;color:#525252">$99,301.60</div>
<div class="t" style="right:1099.6px;top:1830.5px;font-size:12px;color:#525252">$105,640.00</div>
<div class="t" style="right:1049.6px;top:1830.5px;font-size:12px;color:#df3d4c">29%</div>
<div class="t" style="right:915px;top:1830.5px;font-size:12px;color:#525252">$46,388.50</div>
<div class="t" style="right:789.5px;top:1830.5px;font-size:12px;color:#525252">$48,830.00</div>
<div class="t" style="right:742.4000000000001px;top:1830.5px;font-size:12px;color:#df3d4c">30%</div>
<div class="t" style="right:581.5px;top:1830.5px;font-size:12.2px;font-weight:bold;color:#393939">$145,690.10</div>
<div class="t" style="right:444px;top:1830.5px;font-size:12.2px;font-weight:bold;color:#393939">$154,470.00</div>
<div class="t" style="right:358px;top:1830.5px;font-size:12.2px;font-weight:bold;color:#393939">29%</div>
<div class="t" style="left:554.3px;top:1860.5px;font-size:11.3px;color:#393939">Safety</div>
<div class="t" style="right:1225.3px;top:1860.5px;font-size:12px;color:#525252">$419,786.26</div>
<div class="t" style="right:1099.6px;top:1860.5px;font-size:12px;color:#525252">$447,430.00</div>
<div class="t" style="right:1049.6px;top:1860.5px;font-size:12px;color:#df3d4c">37%</div>
<div class="t" style="right:915px;top:1860.5px;font-size:12px;color:#525252">$172,714.40</div>
<div class="t" style="right:789.5px;top:1860.5px;font-size:12px;color:#525252">$181,360.00</div>
<div class="t" style="right:742.4000000000001px;top:1860.5px;font-size:12px;color:#df3d4c">37%</div>
<div class="t" style="right:581.5px;top:1860.5px;font-size:12.2px;font-weight:bold;color:#393939">$592,500.66</div>
<div class="t" style="right:444px;top:1860.5px;font-size:12.2px;font-weight:bold;color:#393939">$628,790.00</div>
<div class="t" style="right:358px;top:1860.5px;font-size:12.2px;font-weight:bold;color:#393939">37%</div>
<div class="t" style="left:554.3px;top:1890.5px;font-size:11.3px;color:#393939">Tools</div>
<div class="t" style="right:1225.3px;top:1890.5px;font-size:12px;color:#525252">$884,369.56</div>
<div class="t" style="right:1099.6px;top:1890.5px;font-size:12px;color:#525252">$933,050.96</div>
<div class="t" style="right:1049.6px;top:1890.5px;font-size:12px;color:#2e7d46">42%</div>
<div class="t" style="right:915px;top:1890.5px;font-size:12px;color:#525252">$241,580.87</div>
<div class="t" style="right:789.5px;top:1890.5px;font-size:12px;color:#525252">$252,928.87</div>
<div class="t" style="right:742.4000000000001px;top:1890.5px;font-size:12px;color:#2e7d46">42%</div>
<div class="t" style="right:581.5px;top:1890.5px;font-size:12.2px;font-weight:bold;color:#393939">$1,125,950.43</div>
<div class="t" style="right:444px;top:1890.5px;font-size:12.2px;font-weight:bold;color:#393939">$1,185,979.83</div>
<div class="t" style="right:358px;top:1890.5px;font-size:12.2px;font-weight:bold;color:#393939">42%</div>
<div class="a" style="left:1653px;top:1192px;width:15px;height:719px;background:#f0f0f0"></div>
<div class="a" style="left:1654px;top:1208px;width:13px;height:650px;background:#c1c1c1"></div>
<svg class="a" style="left:0;top:0" width="2000" height="1920">
<path d="M1680 1088 L1687 1081 M1682.5 1081 H1687 V1085.5 M1694 1074 L1688.5 1079.5 M1688.5 1075.5 V1079.5 H1692.5" stroke="#161616" stroke-width="1.3" fill="none"/>
<path d="M1650.5 1106.5 H1661.5 L1657.5 1111.5 V1117.5 L1654.5 1116 V1111.5 Z" fill="none" stroke="#161616" stroke-width="1.2" stroke-linejoin="round"/><circle cx="1656.5" cy="1112.5" r="1.6" fill="#161616"/>
<path d="M677 1130.5 H1650 M677 1160.5 H1650" stroke="#e0e0e0" stroke-width="1"/>
<path d="M677 1130 V1191" stroke="#e0e0e0" stroke-width="1"/>
<path d="M980.5 1130 V1191" stroke="#e0e0e0" stroke-width="1"/>
<path d="M1287 1130 V1191" stroke="#e0e0e0" stroke-width="1"/>
<path d="M1650 1130 V1191" stroke="#e0e0e0" stroke-width="1"/>
<path d="M782.5 1160 V1191" stroke="#e0e0e0" stroke-width="1"/>
<path d="M908 1160 V1191" stroke="#e0e0e0" stroke-width="1"/>
<path d="M1091.5 1160 V1191" stroke="#e0e0e0" stroke-width="1"/>
<path d="M1218 1160 V1191" stroke="#e0e0e0" stroke-width="1"/>
<path d="M1425.5 1160 V1191" stroke="#e0e0e0" stroke-width="1"/>
<path d="M1563 1160 V1191" stroke="#e0e0e0" stroke-width="1"/>
<path d="M704.5 1146.5 H712.5 M708.5 1142.5 V1150.5" stroke="#3c78f0" stroke-width="1.1"/>
<path d="M1006 1146.5 H1014 M1010 1142.5 V1150.5" stroke="#3c78f0" stroke-width="1.1"/>
<path d="M400 1581.5 H486" stroke="#d8d8d8" stroke-width="1"/><path d="M486 1581 V1911" stroke="#e0e0e0" stroke-width="1"/><path d="M400 1911.5 H1650" stroke="#e0e0e0" stroke-width="1"/>
<path d="M427 1386.5 H435 M431 1382.5 V1390.5" stroke="#3c78f0" stroke-width="1.1"/>
<path d="M427 1776.5 H435 M431 1772.5 V1780.5" stroke="#3c78f0" stroke-width="1.1"/>
<path d="M486 1191.5 H1650" stroke="#e0e0e0" stroke-width="1"/>
<path d="M512.5 1206.5 H520.5 M516.5 1202.5 V1210.5" stroke="#3c78f0" stroke-width="1.1"/>
<path d="M966.3 1200 V1212 M962.3 1208 L966.3 1212 L970.3 1208" stroke="#df3d4c" stroke-width="1.2" fill="none"/>
<path d="M1272.5 1200 V1212 M1268.5 1208 L1272.5 1212 L1276.5 1208" stroke="#df3d4c" stroke-width="1.2" fill="none"/>
<path d="M486 1221.5 H1650" stroke="#e0e0e0" stroke-width="1"/>
<path d="M512.5 1236.5 H520.5 M516.5 1232.5 V1240.5" stroke="#3c78f0" stroke-width="1.1"/>
<path d="M966.3 1242 V1230 M962.3 1234 L966.3 1230 L970.3 1234" stroke="#2e7d46" stroke-width="1.2" fill="none"/>
<path d="M1272.5 1242 V1230 M1268.5 1234 L1272.5 1230 L1276.5 1234" stroke="#2e7d46" stroke-width="1.2" fill="none"/>
<path d="M486 1251.5 H1650" stroke="#e0e0e0" stroke-width="1"/>
<path d="M512.0 1267.5 H521.0" stroke="#3c78f0" stroke-width="1.2"/>
<path d="M966.3 1260 V1272 M962.3 1268 L966.3 1272 L970.3 1268" stroke="#df3d4c" stroke-width="1.2" fill="none"/>
<path d="M1272.5 1272 V1260 M1268.5 1264 L1272.5 1260 L1276.5 1264" stroke="#2e7d46" stroke-width="1.2" fill="none"/>
<path d="M486 1281.5 H1650" stroke="#e0e0e0" stroke-width="1"/>
<path d="M508.5 1281 V1311" stroke="#e0e0e0" stroke-width="1"/>
<path d="M534.5 1296.5 H542.5 M538.5 1292.5 V1300.5" stroke="#3c78f0" stroke-width="1.1"/>
<path d="M966.3 1302 V1290 M962.3 1294 L966.3 1290 L970.3 1294" stroke="#2e7d46" stroke-width="1.2" fill="none"/>
<path d="M1272.5 1302 V1290 M1268.5 1294 L1272.5 1290 L1276.5 1294" stroke="#2e7d46" stroke-width="1.2" fill="none"/>
<path d="M508.6 1311.5 H1650" stroke="#e0e0e0" stroke-width="1"/>
<path d="M508.5 1311 V1341" stroke="#e0e0e0" stroke-width="1"/>
<path d="M534.0 1327.5 H543.0" stroke="#3c78f0" stroke-width="1.2"/>
<path d="M966.3 1320 V1332 M962.3 1328 L966.3 1332 L970.3 1328" stroke="#df3d4c" stroke-width="1.2" fill="none"/>
<path d="M1272.5 1320 V1332 M1268.5 1328 L1272.5 1332 L1276.5 1328" stroke="#df3d4c" stroke-width="1.2" fill="none"/>
<path d="M508.6 1341.5 H1650" stroke="#e0e0e0" stroke-width="1"/>
<path d="M508.5 1341 V1371" stroke="#e0e0e0" stroke-width="1"/>
<path d="M529.5 1341 V1371" stroke="#e0e0e0" stroke-width="1"/>
<path d="M557 1356.5 H565 M561 1352.5 V1360.5" stroke="#3c78f0" stroke-width="1.1"/>
<path d="M966.3 1350 V1362 M962.3 1358 L966.3 1362 L970.3 1358" stroke="#df3d4c" stroke-width="1.2" fill="none"/>
<path d="M1272.5 1350 V1362 M1268.5 1358 L1272.5 1362 L1276.5 1358" stroke="#df3d4c" stroke-width="1.2" fill="none"/>
<path d="M529.6 1371.5 H1650" stroke="#e0e0e0" stroke-width="1"/>
<path d="M508.5 1371 V1401" stroke="#e0e0e0" stroke-width="1"/>
<path d="M529.5 1371 V1401" stroke="#e0e0e0" stroke-width="1"/>
<path d="M557 1386.5 H565 M561 1382.5 V1390.5" stroke="#3c78f0" stroke-width="1.1"/>
<path d="M966.3 1380 V1392 M962.3 1388 L966.3 1392 L970.3 1388" stroke="#df3d4c" stroke-width="1.2" fill="none"/>
<path d="M1272.5 1380 V1392 M1268.5 1388 L1272.5 1392 L1276.5 1388" stroke="#df3d4c" stroke-width="1.2" fill="none"/>
<path d="M529.6 1401.5 H1650" stroke="#e0e0e0" stroke-width="1"/>
<path d="M508.5 1401 V1431" stroke="#e0e0e0" stroke-width="1"/>
<path d="M529.5 1401 V1431" stroke="#e0e0e0" stroke-width="1"/>
<path d="M557 1416.5 H565 M561 1412.5 V1420.5" stroke="#3c78f0" stroke-width="1.1"/>
<path d="M966.3 1410 V1422 M962.3 1418 L966.3 1422 L970.3 1418" stroke="#df3d4c" stroke-width="1.2" fill="none"/>
<path d="M1272.5 1410 V1422 M1268.5 1418 L1272.5 1422 L1276.5 1418" stroke="#df3d4c" stroke-width="1.2" fill="none"/>
<path d="M529.6 1431.5 H1650" stroke="#e0e0e0" stroke-width="1"/>
<path d="M508.5 1431 V1461" stroke="#e0e0e0" stroke-width="1"/>
<path d="M529.5 1431 V1461" stroke="#e0e0e0" stroke-width="1"/>
<path d="M557 1446.5 H565 M561 1442.5 V1450.5" stroke="#3c78f0" stroke-width="1.1"/>
<path d="M966.3 1440 V1452 M962.3 1448 L966.3 1452 L970.3 1448" stroke="#df3d4c" stroke-width="1.2" fill="none"/>
<path d="M1272.5 1440 V1452 M1268.5 1448 L1272.5 1452 L1276.5 1448" stroke="#df3d4c" stroke-width="1.2" fill="none"/>
<path d="M508.6 1461.5 H1650" stroke="#e0e0e0" stroke-width="1"/>
<path d="M508.5 1461 V1491" stroke="#e0e0e0" stroke-width="1"/>
<path d="M534.5 1476.5 H542.5 M538.5 1472.5 V1480.5" stroke="#3c78f0" stroke-width="1.1"/>
<path d="M966.3 1470 V1482 M962.3 1478 L966.3 1482 L970.3 1478" stroke="#df3d4c" stroke-width="1.2" fill="none"/>
<path d="M1272.5 1470 V1482 M1268.5 1478 L1272.5 1482 L1276.5 1478" stroke="#df3d4c" stroke-width="1.2" fill="none"/>
<path d="M508.6 1491.5 H1650" stroke="#e0e0e0" stroke-width="1"/>
<path d="M508.5 1491 V1521" stroke="#e0e0e0" stroke-width="1"/>
<path d="M534.5 1506.5 H542.5 M538.5 1502.5 V1510.5" stroke="#3c78f0" stroke-width="1.1"/>
<path d="M966.3 1512 V1500 M962.3 1504 L966.3 1500 L970.3 1504" stroke="#2e7d46" stroke-width="1.2" fill="none"/>
<path d="M1272.5 1512 V1500 M1268.5 1504 L1272.5 1500 L1276.5 1504" stroke="#2e7d46" stroke-width="1.2" fill="none"/>
<path d="M486 1521.5 H1650" stroke="#e0e0e0" stroke-width="1"/>
<path d="M512.5 1536.5 H520.5 M516.5 1532.5 V1540.5" stroke="#3c78f0" stroke-width="1.1"/>
<path d="M966.3 1542 V1530 M962.3 1534 L966.3 1530 L970.3 1534" stroke="#2e7d46" stroke-width="1.2" fill="none"/>
<path d="M1272.5 1542 V1530 M1268.5 1534 L1272.5 1530 L1276.5 1534" stroke="#2e7d46" stroke-width="1.2" fill="none"/>
<path d="M486 1551.5 H1650" stroke="#e0e0e0" stroke-width="1"/>
<path d="M512.5 1566.5 H520.5 M516.5 1562.5 V1570.5" stroke="#3c78f0" stroke-width="1.1"/>
<path d="M966.3 1572 V1560 M962.3 1564 L966.3 1560 L970.3 1564" stroke="#2e7d46" stroke-width="1.2" fill="none"/>
<path d="M1272.5 1572 V1560 M1268.5 1564 L1272.5 1560 L1276.5 1564" stroke="#2e7d46" stroke-width="1.2" fill="none"/>
<path d="M400 1581.5 H1650" stroke="#e0e0e0" stroke-width="1"/>
<path d="M512.5 1596.5 H520.5 M516.5 1592.5 V1600.5" stroke="#3c78f0" stroke-width="1.1"/>
<path d="M966.3 1590 V1602 M962.3 1598 L966.3 1602 L970.3 1598" stroke="#df3d4c" stroke-width="1.2" fill="none"/>
<path d="M1272.5 1590 V1602 M1268.5 1598 L1272.5 1602 L1276.5 1598" stroke="#df3d4c" stroke-width="1.2" fill="none"/>
<path d="M486 1611.5 H1650" stroke="#e0e0e0" stroke-width="1"/>
<path d="M512.5 1626.5 H520.5 M516.5 1622.5 V1630.5" stroke="#3c78f0" stroke-width="1.1"/>
<path d="M966.3 1632 V1620 M962.3 1624 L966.3 1620 L970.3 1624" stroke="#2e7d46" stroke-width="1.2" fill="none"/>
<path d="M1272.5 1632 V1620 M1268.5 1624 L1272.5 1620 L1276.5 1624" stroke="#2e7d46" stroke-width="1.2" fill="none"/>
<path d="M486 1641.5 H1650" stroke="#e0e0e0" stroke-width="1"/>
<path d="M512.0 1657.5 H521.0" stroke="#3c78f0" stroke-width="1.2"/>
<path d="M966.3 1650 V1662 M962.3 1658 L966.3 1662 L970.3 1658" stroke="#df3d4c" stroke-width="1.2" fill="none"/>
<path d="M1272.5 1650 V1662 M1268.5 1658 L1272.5 1662 L1276.5 1658" stroke="#df3d4c" stroke-width="1.2" fill="none"/>
<path d="M486 1671.5 H1650" stroke="#e0e0e0" stroke-width="1"/>
<path d="M508.5 1671 V1701" stroke="#e0e0e0" stroke-width="1"/>
<path d="M534.5 1686.5 H542.5 M538.5 1682.5 V1690.5" stroke="#3c78f0" stroke-width="1.1"/>
<path d="M966.3 1692 V1680 M962.3 1684 L966.3 1680 L970.3 1684" stroke="#2e7d46" stroke-width="1.2" fill="none"/>
<path d="M1272.5 1692 V1680 M1268.5 1684 L1272.5 1680 L1276.5 1684" stroke="#2e7d46" stroke-width="1.2" fill="none"/>
<path d="M508.6 1701.5 H1650" stroke="#e0e0e0" stroke-width="1"/>
<path d="M508.5 1701 V1731" stroke="#e0e0e0" stroke-width="1"/>
<path d="M534.0 1717.5 H543.0" stroke="#3c78f0" stroke-width="1.2"/>
<path d="M966.3 1710 V1722 M962.3 1718 L966.3 1722 L970.3 1718" stroke="#df3d4c" stroke-width="1.2" fill="none"/>
<path d="M1272.5 1710 V1722 M1268.5 1718 L1272.5 1722 L1276.5 1718" stroke="#df3d4c" stroke-width="1.2" fill="none"/>
<path d="M508.6 1731.5 H1650" stroke="#e0e0e0" stroke-width="1"/>
<path d="M508.5 1731 V1761" stroke="#e0e0e0" stroke-width="1"/>
<path d="M529.5 1731 V1761" stroke="#e0e0e0" stroke-width="1"/>
<path d="M557 1746.5 H565 M561 1742.5 V1750.5" stroke="#3c78f0" stroke-width="1.1"/>
<path d="M966.3 1740 V1752 M962.3 1748 L966.3 1752 L970.3 1748" stroke="#df3d4c" stroke-width="1.2" fill="none"/>
<path d="M1272.5 1740 V1752 M1268.5 1748 L1272.5 1752 L1276.5 1748" stroke="#df3d4c" stroke-width="1.2" fill="none"/>
<path d="M529.6 1761.5 H1650" stroke="#e0e0e0" stroke-width="1"/>
<path d="M508.5 1761 V1791" stroke="#e0e0e0" stroke-width="1"/>
<path d="M529.5 1761 V1791" stroke="#e0e0e0" stroke-width="1"/>
<path d="M557 1776.5 H565 M561 1772.5 V1780.5" stroke="#3c78f0" stroke-width="1.1"/>
<path d="M966.3 1770 V1782 M962.3 1778 L966.3 1782 L970.3 1778" stroke="#df3d4c" stroke-width="1.2" fill="none"/>
<path d="M1272.5 1770 V1782 M1268.5 1778 L1272.5 1782 L1276.5 1778" stroke="#df3d4c" stroke-width="1.2" fill="none"/>
<path d="M529.6 1791.5 H1650" stroke="#e0e0e0" stroke-width="1"/>
<path d="M508.5 1791 V1821" stroke="#e0e0e0" stroke-width="1"/>
<path d="M529.5 1791 V1821" stroke="#e0e0e0" stroke-width="1"/>
<path d="M557 1806.5 H565 M561 1802.5 V1810.5" stroke="#3c78f0" stroke-width="1.1"/>
<path d="M966.3 1800 V1812 M962.3 1808 L966.3 1812 L970.3 1808" stroke="#df3d4c" stroke-width="1.2" fill="none"/>
<path d="M1272.5 1800 V1812 M1268.5 1808 L1272.5 1812 L1276.5 1808" stroke="#df3d4c" stroke-width="1.2" fill="none"/>
<path d="M529.6 1821.5 H1650" stroke="#e0e0e0" stroke-width="1"/>
<path d="M508.5 1821 V1851" stroke="#e0e0e0" stroke-width="1"/>
<path d="M529.5 1821 V1851" stroke="#e0e0e0" stroke-width="1"/>
<path d="M557 1836.5 H565 M561 1832.5 V1840.5" stroke="#3c78f0" stroke-width="1.1"/>
<path d="M966.3 1830 V1842 M962.3 1838 L966.3 1842 L970.3 1838" stroke="#df3d4c" stroke-width="1.2" fill="none"/>
<path d="M1272.5 1830 V1842 M1268.5 1838 L1272.5 1842 L1276.5 1838" stroke="#df3d4c" stroke-width="1.2" fill="none"/>
<path d="M508.6 1851.5 H1650" stroke="#e0e0e0" stroke-width="1"/>
<path d="M508.5 1851 V1881" stroke="#e0e0e0" stroke-width="1"/>
<path d="M534.5 1866.5 H542.5 M538.5 1862.5 V1870.5" stroke="#3c78f0" stroke-width="1.1"/>
<path d="M966.3 1860 V1872 M962.3 1868 L966.3 1872 L970.3 1868" stroke="#df3d4c" stroke-width="1.2" fill="none"/>
<path d="M1272.5 1860 V1872 M1268.5 1868 L1272.5 1872 L1276.5 1868" stroke="#df3d4c" stroke-width="1.2" fill="none"/>
<path d="M508.6 1881.5 H1650" stroke="#e0e0e0" stroke-width="1"/>
<path d="M508.5 1881 V1911" stroke="#e0e0e0" stroke-width="1"/>
<path d="M534.5 1896.5 H542.5 M538.5 1892.5 V1900.5" stroke="#3c78f0" stroke-width="1.1"/>
<path d="M966.3 1902 V1890 M962.3 1894 L966.3 1890 L970.3 1894" stroke="#2e7d46" stroke-width="1.2" fill="none"/>
<path d="M1272.5 1902 V1890 M1268.5 1894 L1272.5 1890 L1276.5 1894" stroke="#2e7d46" stroke-width="1.2" fill="none"/>
<path d="M677 1191 V1911" stroke="#e0e0e0" stroke-width="1"/>
<path d="M782.5 1191 V1911" stroke="#e0e0e0" stroke-width="1"/>
<path d="M908 1191 V1911" stroke="#e0e0e0" stroke-width="1"/>
<path d="M980.5 1191 V1911" stroke="#e0e0e0" stroke-width="1"/>
<path d="M1091.5 1191 V1911" stroke="#e0e0e0" stroke-width="1"/>
<path d="M1218 1191 V1911" stroke="#e0e0e0" stroke-width="1"/>
<path d="M1287 1191 V1911" stroke="#e0e0e0" stroke-width="1"/>
<path d="M1425.5 1191 V1911" stroke="#e0e0e0" stroke-width="1"/>
<path d="M1563 1191 V1911" stroke="#e0e0e0" stroke-width="1"/>
<path d="M1650 1191 V1911" stroke="#e0e0e0" stroke-width="1"/>
<path d="M1657 1203 L1660.5 1199 L1664 1203 Z" fill="#a8a8a8"/><path d="M1657 1906 L1660.5 1910 L1664 1906 Z" fill="#505050"/>
</svg>
<div class="a" style="left:1702px;top:1066px;width:1px;height:845px;background:#e0e0e0"></div>
<div class="t" style="left:1741px;top:1091.5px;font-size:12.9px;color:#262626">Columns</div>
<div class="a" style="left:1717px;top:1116px;width:270px;height:52px;background:#f4f4f4"></div>
<div class="t" style="left:1748px;top:1123px;font-size:12.8px;font-weight:bold;color:#262626">Year</div>
<div class="t" style="left:1748px;top:1147px;font-size:11.7px;color:#393939">Includes: 2012, 2011</div>
<div class="a" style="left:1717px;top:1176px;width:271px;height:37px;border:1px dashed #8d8d8d;box-sizing:border-box"></div>
<div class="t" style="left:1717px;width:271px;text-align:center;top:1187.5px;font-size:11.6px;color:#a8a8a8">Click or drag data here</div>
<div class="t" style="left:1741px;top:1237.5px;font-size:12.9px;color:#262626">Rows</div>
<div class="a" style="left:1717px;top:1262px;width:270px;height:52px;background:#f4f4f4"></div>
<div class="t" style="left:1748px;top:1269px;font-size:12.8px;font-weight:bold;color:#262626">Order method</div>
<div class="t" style="left:1748px;top:1293px;font-size:11.7px;color:#393939">Includes: Fax, Mail</div>
<div class="a" style="left:1717px;top:1323px;width:270px;height:36px;background:#f4f4f4"></div>
<div class="t" style="left:1748px;top:1333.5px;font-size:13px;color:#393939">Product line</div>
<div class="a" style="left:1717px;top:1367px;width:271px;height:37px;border:1px dashed #8d8d8d;box-sizing:border-box"></div>
<div class="t" style="left:1717px;width:271px;text-align:center;top:1378.5px;font-size:11.6px;color:#a8a8a8">Click or drag data here</div>
<div class="t" style="left:1718px;top:1427px;font-size:17px;font-weight:bold;color:#161616">#</div>
<div class="t" style="left:1740.5px;top:1429px;font-size:12.8px;font-weight:bold;color:#262626">Values<span style="color:#da1e28">*</span></div>
<div class="t" style="right:13px;top:1430px;font-size:11.35px;color:#393939">Required field</div>
<div class="a" style="left:1717px;top:1454px;width:270px;height:36px;background:#f4f4f4"></div>
<div class="t" style="left:1748px;top:1464.5px;font-size:13px;color:#393939">Revenue</div>
<div class="a" style="left:1717px;top:1498px;width:270px;height:38px;background:#f4f4f4"></div>
<div class="t" style="left:1748px;top:1509.5px;font-size:13px;color:#393939">Planned revenue</div>
<div class="a" style="left:1717px;top:1543px;width:270px;height:37px;background:#f4f4f4"></div>
<div class="t" style="left:1748px;top:1554.0px;font-size:13px;color:#393939">Margin</div>
<div class="a" style="left:1717px;top:1588px;width:271px;height:37px;border:1px dashed #8d8d8d;box-sizing:border-box"></div>
<div class="t" style="left:1717px;width:271px;text-align:center;top:1599.5px;font-size:11.6px;color:#a8a8a8">Click or drag data here</div>
<div class="t" style="left:1740.5px;top:1658px;font-size:12.9px;color:#262626">Local filters</div>
<div class="a" style="left:1717px;top:1690px;width:271px;height:38px;border:1px dashed #8d8d8d;box-sizing:border-box"></div>
<div class="t" style="left:1717px;width:271px;text-align:center;top:1702.0px;font-size:11.6px;color:#a8a8a8">Click or drag data here</div>
<svg class="a" style="left:1700px;top:1060px" width="300" height="860">
<rect x="17.5" y="32.5" width="15" height="13" fill="none" stroke="#262626" stroke-width="1.2"/><rect x="18" y="33" width="4" height="12" fill="#262626"/><path d="M27.5 32.5 V45.5" stroke="#262626" stroke-width="1.2"/>
<circle cx="31" cy="78.0" r="1.2" fill="#393939"/>
<circle cx="31" cy="82.0" r="1.2" fill="#393939"/>
<circle cx="31" cy="86.0" r="1.2" fill="#393939"/>
<circle cx="35" cy="78.0" r="1.2" fill="#393939"/>
<circle cx="35" cy="82.0" r="1.2" fill="#393939"/>
<circle cx="35" cy="86.0" r="1.2" fill="#393939"/>
<circle cx="264.5" cy="66.5" r="1.2" fill="#262626"/>
<circle cx="264.5" cy="70.5" r="1.2" fill="#262626"/>
<circle cx="264.5" cy="74.5" r="1.2" fill="#262626"/>
<circle cx="271.5" cy="95" r="9.3" fill="#393939"/>
<text x="271.5" y="99.5" text-anchor="middle" font-family="Liberation Sans" font-weight="bold" font-size="12" fill="#fff">2</text>
<rect x="17.5" y="178.5" width="15" height="13" fill="none" stroke="#262626" stroke-width="1.2"/><rect x="18" y="179" width="14" height="4" fill="#262626"/><path d="M17.5 185.5 H32.5" stroke="#262626" stroke-width="1.2"/>
<circle cx="31" cy="224.0" r="1.2" fill="#393939"/>
<circle cx="31" cy="228.0" r="1.2" fill="#393939"/>
<circle cx="31" cy="232.0" r="1.2" fill="#393939"/>
<circle cx="35" cy="224.0" r="1.2" fill="#393939"/>
<circle cx="35" cy="228.0" r="1.2" fill="#393939"/>
<circle cx="35" cy="232.0" r="1.2" fill="#393939"/>
<circle cx="264.5" cy="212.5" r="1.2" fill="#262626"/>
<circle cx="264.5" cy="216.5" r="1.2" fill="#262626"/>
<circle cx="264.5" cy="220.5" r="1.2" fill="#262626"/>
<circle cx="271.5" cy="241" r="9.3" fill="#393939"/>
<text x="271.5" y="245.5" text-anchor="middle" font-family="Liberation Sans" font-weight="bold" font-size="12" fill="#fff">2</text>
<circle cx="31" cy="277.0" r="1.2" fill="#393939"/>
<circle cx="31" cy="281.0" r="1.2" fill="#393939"/>
<circle cx="31" cy="285.0" r="1.2" fill="#393939"/>
<circle cx="35" cy="277.0" r="1.2" fill="#393939"/>
<circle cx="35" cy="281.0" r="1.2" fill="#393939"/>
<circle cx="35" cy="285.0" r="1.2" fill="#393939"/>
<circle cx="264.5" cy="277.0" r="1.2" fill="#262626"/>
<circle cx="264.5" cy="281.0" r="1.2" fill="#262626"/>
<circle cx="264.5" cy="285.0" r="1.2" fill="#262626"/>
<circle cx="31" cy="408.0" r="1.2" fill="#393939"/>
<circle cx="31" cy="412.0" r="1.2" fill="#393939"/>
<circle cx="31" cy="416.0" r="1.2" fill="#393939"/>
<circle cx="35" cy="408.0" r="1.2" fill="#393939"/>
<circle cx="35" cy="412.0" r="1.2" fill="#393939"/>
<circle cx="35" cy="416.0" r="1.2" fill="#393939"/>
<circle cx="264.5" cy="408.0" r="1.2" fill="#262626"/>
<circle cx="264.5" cy="412.0" r="1.2" fill="#262626"/>
<circle cx="264.5" cy="416.0" r="1.2" fill="#262626"/>
<circle cx="31" cy="453.0" r="1.2" fill="#393939"/>
<circle cx="31" cy="457.0" r="1.2" fill="#393939"/>
<circle cx="31" cy="461.0" r="1.2" fill="#393939"/>
<circle cx="35" cy="453.0" r="1.2" fill="#393939"/>
<circle cx="35" cy="457.0" r="1.2" fill="#393939"/>
<circle cx="35" cy="461.0" r="1.2" fill="#393939"/>
<circle cx="264.5" cy="453.0" r="1.2" fill="#262626"/>
<circle cx="264.5" cy="457.0" r="1.2" fill="#262626"/>
<circle cx="264.5" cy="461.0" r="1.2" fill="#262626"/>
<circle cx="31" cy="497.5" r="1.2" fill="#393939"/>
<circle cx="31" cy="501.5" r="1.2" fill="#393939"/>
<circle cx="31" cy="505.5" r="1.2" fill="#393939"/>
<circle cx="35" cy="497.5" r="1.2" fill="#393939"/>
<circle cx="35" cy="501.5" r="1.2" fill="#393939"/>
<circle cx="35" cy="505.5" r="1.2" fill="#393939"/>
<circle cx="264.5" cy="497.5" r="1.2" fill="#262626"/>
<circle cx="264.5" cy="501.5" r="1.2" fill="#262626"/>
<circle cx="264.5" cy="505.5" r="1.2" fill="#262626"/>
<path d="M19.5 601.5 H31.5 L27 607 V612.5 L24 611 V607 Z" fill="none" stroke="#262626" stroke-width="1.2" stroke-linejoin="round"/>
</svg>
<div class="a" style="left:262px;top:1533px;width:169px;height:300px;background:#fff;box-shadow:0 1px 4px rgba(0,0,0,0.3)"></div>
<div class="t" style="left:279px;top:1541.5px;font-size:13.5px;color:#393939">Show data</div>
<div class="t" style="left:279px;top:1571.5px;font-size:13.5px;color:#393939">Sort</div>
<div class="t" style="left:279px;top:1601.5px;font-size:13.5px;color:#393939">Filter</div>
<div class="t" style="left:279px;top:1631.5px;font-size:13.5px;color:#393939">Top or bottom</div>
<div class="t" style="left:279px;top:1661.5px;font-size:13.5px;color:#393939">Format data</div>
<div class="t" style="left:279px;top:1691.5px;font-size:13.5px;color:#393939">Keep</div>
<div class="t" style="left:279px;top:1721.5px;font-size:13.5px;color:#393939">Exclude</div>
<div class="t" style="left:279px;top:1751.5px;font-size:13.5px;color:#393939">Style text</div>
<div class="t" style="left:279px;top:1781.5px;font-size:13.5px;color:#393939">Drill up</div>
<div class="t" style="left:279px;top:1811.5px;font-size:13.5px;color:#393939">Drill down</div>
<svg class="a" style="left:400px;top:1570px" width="20" height="20"><path d="M5 4.5 L10 9 L5 13.5 Z" fill="#161616"/></svg>
<svg class="a" style="left:0;top:0" width="2000" height="1920"><path d="M1316 792 H1485 V960 H1568 L1400.5 1128 L1232 960 H1316 Z" fill="rgb(65,100,160)" fill-opacity="0.8"/></svg>
</body></html>
